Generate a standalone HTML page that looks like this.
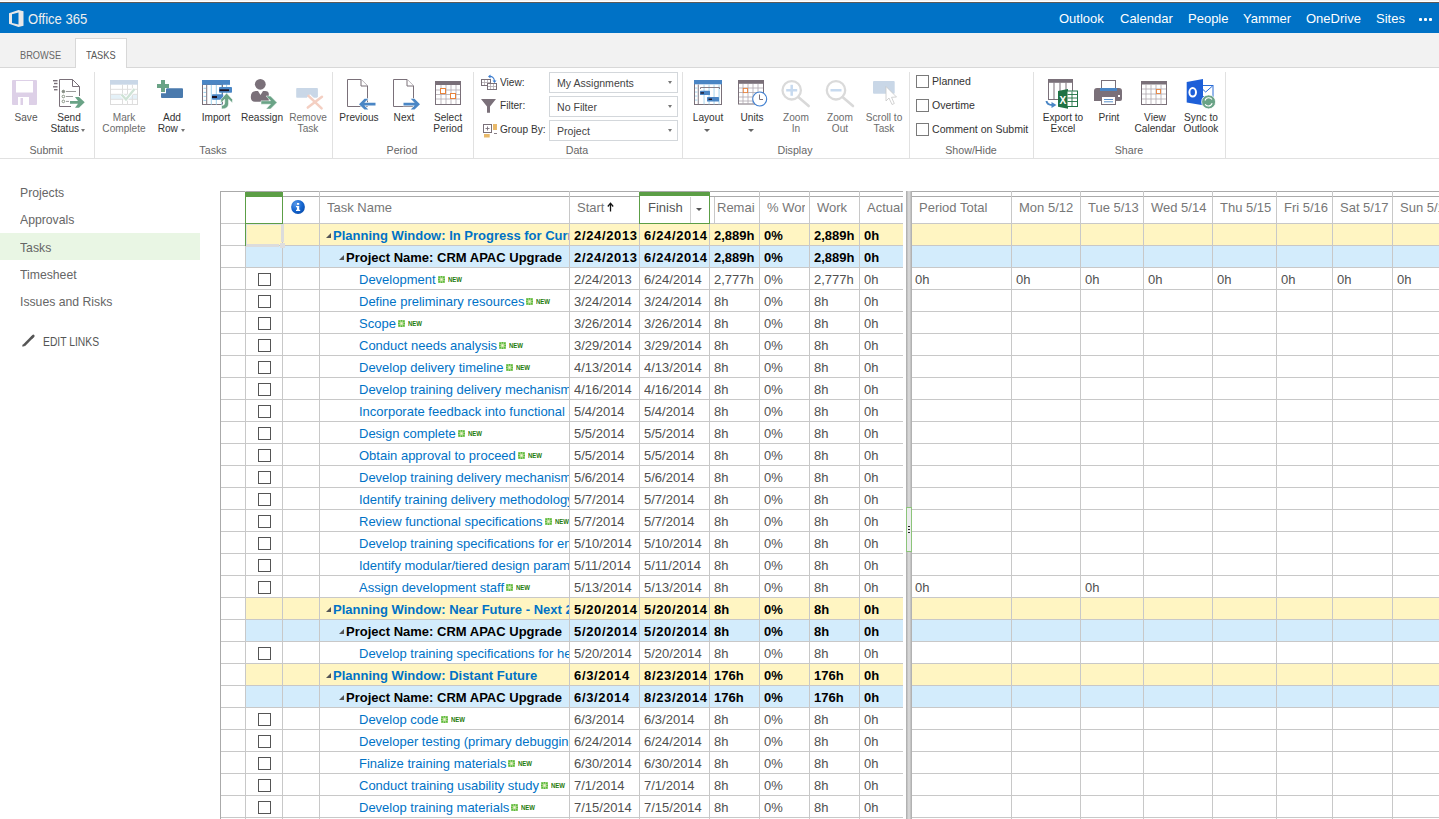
<!DOCTYPE html><html><head><meta charset="utf-8"><style>
*{margin:0;padding:0;box-sizing:border-box}
html,body{width:1439px;height:819px;overflow:hidden;background:#fff;font-family:"Liberation Sans",sans-serif;color:#444}
.a{position:absolute;white-space:nowrap}
.t{position:absolute;white-space:nowrap;line-height:14px}
</style></head><body>
<div class="a" style="left:0;top:0;width:1439px;height:1px;background:#f3f3f3"></div>
<div class="a" style="left:0;top:2px;width:1439px;height:1px;background:#5e5a57"></div>
<div class="a" style="left:0;top:3px;width:1439px;height:30px;background:#0072c6"></div>
<svg class="a" style="left:9px;top:10px" width="15" height="17" viewBox="0 0 15 17">
<path d="M0 3.2 L9.5 0 L14.5 1.3 L14.5 15.7 L9.5 17 L0 13.8 Z M3 4.3 L3 12.9 L9.5 14.6 L9.5 2.4 Z" fill="#e8e8e8" fill-rule="evenodd"/></svg>
<div class="t" style="left:28px;top:11px;font-size:15px;line-height:15px;color:#eee;transform-origin:0 0;transform:scaleX(0.87)">Office 365</div>
<div class="t" style="left:1059px;top:12px;font-size:13px;color:#fff">Outlook</div>
<div class="t" style="left:1120px;top:12px;font-size:13px;color:#fff">Calendar</div>
<div class="t" style="left:1188px;top:12px;font-size:13px;color:#fff">People</div>
<div class="t" style="left:1243px;top:12px;font-size:13px;color:#fff">Yammer</div>
<div class="t" style="left:1306px;top:12px;font-size:13px;color:#fff">OneDrive</div>
<div class="t" style="left:1376px;top:12px;font-size:13px;color:#fff">Sites</div>
<div class="a" style="left:1419px;top:18px;width:3px;height:3px;background:#fff;border-radius:1px"></div>
<div class="a" style="left:1424px;top:18px;width:3px;height:3px;background:#fff;border-radius:1px"></div>
<div class="a" style="left:1429px;top:18px;width:3px;height:3px;background:#fff;border-radius:1px"></div>
<div class="a" style="left:0;top:33px;width:1439px;height:35px;background:#f2f2f2;border-bottom:1px solid #d8d8d8"></div>
<div class="a" style="left:75px;top:38px;width:52px;height:30px;background:#fff;border:1px solid #d8d8d8;border-bottom:none"></div>
<div class="t" style="left:20px;top:48px;font-size:11px;color:#666;transform-origin:0 0;transform:scaleX(0.84)">BROWSE</div>
<div class="t" style="left:86px;top:48px;font-size:11px;color:#555;transform-origin:0 0;transform:scaleX(0.84)">TASKS</div>
<div class="a" style="left:0;top:158px;width:1439px;height:1px;background:#e1e1e1"></div>
<div class="a" style="left:94px;top:72px;width:1px;height:86px;background:#e1e1e1"></div>
<div class="a" style="left:332px;top:72px;width:1px;height:86px;background:#e1e1e1"></div>
<div class="a" style="left:473px;top:72px;width:1px;height:86px;background:#e1e1e1"></div>
<div class="a" style="left:682px;top:72px;width:1px;height:86px;background:#e1e1e1"></div>
<div class="a" style="left:909px;top:72px;width:1px;height:86px;background:#e1e1e1"></div>
<div class="a" style="left:1033px;top:72px;width:1px;height:86px;background:#e1e1e1"></div>
<div class="a" style="left:1225px;top:72px;width:1px;height:86px;background:#e1e1e1"></div>
<div class="t" style="left:-54.5px;width:200px;top:143px;font-size:11px;text-align:center;color:#666;transform:scaleX(0.97)">Submit</div>
<div class="t" style="left:112.5px;width:200px;top:143px;font-size:11px;text-align:center;color:#666;transform:scaleX(0.97)">Tasks</div>
<div class="t" style="left:301.5px;width:200px;top:143px;font-size:11px;text-align:center;color:#666;transform:scaleX(0.97)">Period</div>
<div class="t" style="left:476.5px;width:200px;top:143px;font-size:11px;text-align:center;color:#666;transform:scaleX(0.97)">Data</div>
<div class="t" style="left:694.5px;width:200px;top:143px;font-size:11px;text-align:center;color:#666;transform:scaleX(0.97)">Display</div>
<div class="t" style="left:870.5px;width:200px;top:143px;font-size:11px;text-align:center;color:#666;transform:scaleX(0.97)">Show/Hide</div>
<div class="t" style="left:1028.5px;width:200px;top:143px;font-size:11px;text-align:center;color:#666;transform:scaleX(0.97)">Share</div>
<div class="t" style="left:-74.5px;width:200px;top:110px;font-size:11px;text-align:center;color:#555;transform:scaleX(0.92)">Save</div>
<div class="t" style="left:-31.5px;width:200px;top:110px;font-size:11px;text-align:center;color:#333;transform:scaleX(0.92)">Send</div>
<div class="t" style="left:-31.5px;width:200px;top:121px;font-size:11px;text-align:center;color:#333;transform:scaleX(0.92)">Status&nbsp;&nbsp;&nbsp;</div>
<div class="t" style="left:23.5px;width:200px;top:110px;font-size:11px;text-align:center;color:#6c6c6c;transform:scaleX(0.92)">Mark</div>
<div class="t" style="left:23.5px;width:200px;top:121px;font-size:11px;text-align:center;color:#6c6c6c;transform:scaleX(0.92)">Complete</div>
<div class="t" style="left:71.5px;width:200px;top:110px;font-size:11px;text-align:center;color:#333;transform:scaleX(0.92)">Add</div>
<div class="t" style="left:71.5px;width:200px;top:121px;font-size:11px;text-align:center;color:#333;transform:scaleX(0.92)">Row&nbsp;&nbsp;&nbsp;</div>
<div class="t" style="left:115.5px;width:200px;top:110px;font-size:11px;text-align:center;color:#333;transform:scaleX(0.92)">Import</div>
<div class="t" style="left:161.5px;width:200px;top:110px;font-size:11px;text-align:center;color:#333;transform:scaleX(0.92)">Reassign</div>
<div class="t" style="left:207.5px;width:200px;top:110px;font-size:11px;text-align:center;color:#6c6c6c;transform:scaleX(0.92)">Remove</div>
<div class="t" style="left:207.5px;width:200px;top:121px;font-size:11px;text-align:center;color:#6c6c6c;transform:scaleX(0.92)">Task</div>
<div class="t" style="left:258.5px;width:200px;top:110px;font-size:11px;text-align:center;color:#333;transform:scaleX(0.92)">Previous</div>
<div class="t" style="left:303.5px;width:200px;top:110px;font-size:11px;text-align:center;color:#333;transform:scaleX(0.92)">Next</div>
<div class="t" style="left:347.5px;width:200px;top:110px;font-size:11px;text-align:center;color:#333;transform:scaleX(0.92)">Select</div>
<div class="t" style="left:347.5px;width:200px;top:121px;font-size:11px;text-align:center;color:#333;transform:scaleX(0.92)">Period</div>
<div class="t" style="left:607.5px;width:200px;top:110px;font-size:11px;text-align:center;color:#333;transform:scaleX(0.92)">Layout</div>
<div class="t" style="left:651.5px;width:200px;top:110px;font-size:11px;text-align:center;color:#333;transform:scaleX(0.92)">Units</div>
<div class="t" style="left:695.5px;width:200px;top:110px;font-size:11px;text-align:center;color:#6c6c6c;transform:scaleX(0.92)">Zoom</div>
<div class="t" style="left:695.5px;width:200px;top:121px;font-size:11px;text-align:center;color:#6c6c6c;transform:scaleX(0.92)">In</div>
<div class="t" style="left:739.5px;width:200px;top:110px;font-size:11px;text-align:center;color:#6c6c6c;transform:scaleX(0.92)">Zoom</div>
<div class="t" style="left:739.5px;width:200px;top:121px;font-size:11px;text-align:center;color:#6c6c6c;transform:scaleX(0.92)">Out</div>
<div class="t" style="left:783.5px;width:200px;top:110px;font-size:11px;text-align:center;color:#6c6c6c;transform:scaleX(0.92)">Scroll to</div>
<div class="t" style="left:783.5px;width:200px;top:121px;font-size:11px;text-align:center;color:#6c6c6c;transform:scaleX(0.92)">Task</div>
<div class="t" style="left:962.5px;width:200px;top:110px;font-size:11px;text-align:center;color:#333;transform:scaleX(0.92)">Export to</div>
<div class="t" style="left:962.5px;width:200px;top:121px;font-size:11px;text-align:center;color:#333;transform:scaleX(0.92)">Excel</div>
<div class="t" style="left:1008.5px;width:200px;top:110px;font-size:11px;text-align:center;color:#333;transform:scaleX(0.92)">Print</div>
<div class="t" style="left:1054.5px;width:200px;top:110px;font-size:11px;text-align:center;color:#333;transform:scaleX(0.92)">View</div>
<div class="t" style="left:1054.5px;width:200px;top:121px;font-size:11px;text-align:center;color:#333;transform:scaleX(0.92)">Calendar</div>
<div class="t" style="left:1100.5px;width:200px;top:110px;font-size:11px;text-align:center;color:#333;transform:scaleX(0.92)">Sync to</div>
<div class="t" style="left:1100.5px;width:200px;top:121px;font-size:11px;text-align:center;color:#333;transform:scaleX(0.92)">Outlook</div>
<div class="a" style="left:81px;top:129px;width:0;height:0;border-left:2.5px solid transparent;border-right:2.5px solid transparent;border-top:3px solid #777"></div>
<div class="a" style="left:181px;top:129px;width:0;height:0;border-left:2.5px solid transparent;border-right:2.5px solid transparent;border-top:3px solid #777"></div>
<div class="a" style="left:704px;top:129px;width:0;height:0;border-left:3px solid transparent;border-right:3px solid transparent;border-top:3px solid #666"></div>
<div class="a" style="left:748px;top:129px;width:0;height:0;border-left:3px solid transparent;border-right:3px solid transparent;border-top:3px solid #666"></div>
<div class="t" style="left:500px;top:75px;font-size:11px;color:#333;transform-origin:0 0;transform:scaleX(0.92)">View:</div>
<div class="t" style="left:500px;top:98px;font-size:11px;color:#333;transform-origin:0 0;transform:scaleX(0.92)">Filter:</div>
<div class="t" style="left:500px;top:122px;font-size:11px;color:#333;transform-origin:0 0;transform:scaleX(0.92)">Group By:</div>
<div class="a" style="left:549px;top:72px;width:129px;height:21px;border:1px solid #d3d7db;background:#fff"></div>
<div class="t" style="left:557px;top:76px;font-size:11px;color:#444;transform-origin:0 0;transform:scaleX(0.96)">My Assignments</div>
<div class="a" style="left:668px;top:81px;width:0;height:0;border-left:2.5px solid transparent;border-right:2.5px solid transparent;border-top:3px solid #777"></div>
<div class="a" style="left:549px;top:96px;width:129px;height:21px;border:1px solid #d3d7db;background:#fff"></div>
<div class="t" style="left:557px;top:100px;font-size:11px;color:#444;transform-origin:0 0;transform:scaleX(0.96)">No Filter</div>
<div class="a" style="left:668px;top:105px;width:0;height:0;border-left:2.5px solid transparent;border-right:2.5px solid transparent;border-top:3px solid #777"></div>
<div class="a" style="left:549px;top:120px;width:129px;height:21px;border:1px solid #d3d7db;background:#fff"></div>
<div class="t" style="left:557px;top:124px;font-size:11px;color:#444;transform-origin:0 0;transform:scaleX(0.96)">Project</div>
<div class="a" style="left:668px;top:129px;width:0;height:0;border-left:2.5px solid transparent;border-right:2.5px solid transparent;border-top:3px solid #777"></div>
<div class="a" style="left:916px;top:75px;width:13px;height:13px;border:1px solid #7a7a7a;background:#fff"></div>
<div class="t" style="left:932px;top:74px;font-size:11px;color:#333;transform-origin:0 0;transform:scaleX(0.96)">Planned</div>
<div class="a" style="left:916px;top:99px;width:13px;height:13px;border:1px solid #7a7a7a;background:#fff"></div>
<div class="t" style="left:932px;top:98px;font-size:11px;color:#333;transform-origin:0 0;transform:scaleX(0.96)">Overtime</div>
<div class="a" style="left:916px;top:123px;width:13px;height:13px;border:1px solid #7a7a7a;background:#fff"></div>
<div class="t" style="left:932px;top:122px;font-size:11px;color:#333;transform-origin:0 0;transform:scaleX(0.96)">Comment on Submit</div>
<div class="a" style="left:0;top:233px;width:200px;height:27px;background:#e9f6e4"></div>
<div class="t" style="left:20px;top:185px;font-size:13px;line-height:16px;color:#666;transform-origin:0 0;transform:scaleX(0.94)">Projects</div>
<div class="t" style="left:20px;top:212px;font-size:13px;line-height:16px;color:#666;transform-origin:0 0;transform:scaleX(0.94)">Approvals</div>
<div class="t" style="left:20px;top:240px;font-size:13px;line-height:16px;color:#666;transform-origin:0 0;transform:scaleX(0.94)">Tasks</div>
<div class="t" style="left:20px;top:267px;font-size:13px;line-height:16px;color:#666;transform-origin:0 0;transform:scaleX(0.94)">Timesheet</div>
<div class="t" style="left:20px;top:294px;font-size:13px;line-height:16px;color:#666;transform-origin:0 0;transform:scaleX(0.94)">Issues and Risks</div>
<div class="t" style="left:43px;top:335px;font-size:12px;color:#555;transform-origin:0 0;transform:scaleX(0.86)">EDIT LINKS</div>
<svg class="a" style="left:20px;top:333px" width="16" height="15" viewBox="0 0 16 15"><path d="M4 12.3 L12.6 3.7" stroke="#555" stroke-width="2.6"/><path d="M12 4.3 L13.3 3" stroke="#555" stroke-width="2.6" stroke-linecap="round"/><path d="M3.2 11.6 L2.6 13.2 L4.4 12.8 Z" fill="#555" stroke="#555" stroke-width="0.8"/></svg>
<svg class="a" style="left:0;top:0" width="1439" height="160" viewBox="0 0 1439 160"><path d="M12 81 Q12 80 13 80 L36 80 Q37 80 37 81 L37 104 Q37 105 36 105 L13 105 Q12 105 12 104 Z" fill="#ddd0e7"/><rect x="16" y="81" width="17" height="11.5" fill="#fff"/><rect x="18" y="97" width="11" height="8" fill="#fff"/><rect x="20.5" y="98" width="2.5" height="7" fill="#ddd0e7"/><path d="M71 106.5 L59.5 106.5 L59.5 79.5 L72.5 79.5 L79.5 86.5 L79.5 96" fill="none" stroke="#7a7079" stroke-width="1"/><path d="M72.5 79.5 L72.5 86.5 L79.5 86.5" fill="none" stroke="#7a7079" stroke-width="1"/><rect x="53" y="80.0" width="4.5" height="1.4" fill="#7a7079"/><rect x="54" y="82.8" width="3.5" height="1.4" fill="#7a7079"/><rect x="53" y="86.1" width="4.5" height="1.4" fill="#7a7079"/><rect x="54" y="89.0" width="3.5" height="1.4" fill="#7a7079"/><circle cx="63.4" cy="91.5" r="1.3" fill="#8a8a8a" stroke="#7d8a78" stroke-width="0.9"/><rect x="66" y="91.0" width="10" height="1" fill="#9a9a9a"/><circle cx="63.4" cy="96.5" r="1.3" fill="none" stroke="#7d8a78" stroke-width="0.9"/><rect x="66" y="96.0" width="7" height="1" fill="#9a9a9a"/><circle cx="63.4" cy="101.4" r="1.3" fill="none" stroke="#7d8a78" stroke-width="0.9"/><rect x="66" y="100.9" width="3" height="1" fill="#9a9a9a"/><path d="M70 101 L78 101 L75 97 L79 97 L84.7 102.3 L79 107.7 L75 107.7 L78 103.7 L70 103.7 Z" fill="#6aa386"/><rect x="110.5" y="80.5" width="27" height="24" fill="#fff" stroke="#dcdcdc"/><rect x="110" y="80" width="28" height="4.7" fill="#c9d7e7"/><rect x="111" y="94.3" width="26" height="4.8" fill="#e4f1f8"/><rect x="111" y="88.8" width="26" height="1" fill="#dedede"/><rect x="111" y="93.8" width="26" height="1" fill="#dedede"/><rect x="111" y="98.8" width="26" height="1" fill="#dedede"/><rect x="122.0" y="84.7" width="1" height="20" fill="#dedede"/><rect x="127.0" y="84.7" width="1" height="20" fill="#dedede"/><rect x="131.9" y="84.7" width="1" height="20" fill="#dedede"/><path d="M121.5 94.5 L126 99.5 L134.5 89" fill="none" stroke="#fff" stroke-width="4"/><path d="M121.5 94.5 L126 99.5 L134.5 89" fill="none" stroke="#cfe3d6" stroke-width="2.4"/><path d="M161 80 L165 80 L165 84 L169 84 L169 88 L165 88 L165 92 L161 92 L161 88 L157 88 L157 84 L161 84 Z" fill="#6aa386"/><path d="M167 88.2 L182 88.2 Q183 88.2 183 89 L183 97 Q183 98 182 98 L162 98 Q161 98 161 97 L161 93.2 L166 93.2 L166 89 Z" fill="#4a7aad"/><rect x="202.5" y="84.5" width="20" height="20" fill="#fff" stroke="#7a7079"/><rect x="206.2" y="84.7" width="1" height="20" fill="#7a7079"/><rect x="210.8" y="84.7" width="1" height="20" fill="#9fd3ee"/><rect x="215.8" y="84.7" width="1" height="20" fill="#9fd3ee"/><rect x="221.1" y="84.7" width="1" height="20" fill="#9fd3ee"/><rect x="226.1" y="84.7" width="1" height="20" fill="#9fd3ee"/><rect x="203.5" y="87.8" width="2.5" height="1" fill="#9fd3ee"/><rect x="203.5" y="91.9" width="2.5" height="1" fill="#9fd3ee"/><rect x="203.5" y="95.9" width="2.5" height="1" fill="#9fd3ee"/><rect x="203.5" y="99.9" width="2.5" height="1" fill="#9fd3ee"/><rect x="222.5" y="104" width="6" height="1.2" fill="#fff"/><rect x="202" y="80" width="28" height="4.8" fill="#4a86c5"/><rect x="219" y="87" width="13" height="5.8" rx="0.8" fill="#4a86c5"/><rect x="219.5" y="89.3" width="9.5" height="1.8" fill="#1a0f1e"/><rect x="212" y="94.3" width="11.3" height="5.4" rx="0.8" fill="#4a86c5"/><rect x="212" y="96" width="5" height="2" fill="#1a0f1e"/><path d="M226.6 93 L232.5 99.5 L232.5 103 L228.6 99.3 L228.6 104 Q228.3 109 221.5 109 L221.5 105.5 Q224.6 105.5 224.7 103 L224.7 99.3 L220.8 103 L220.8 99.5 Z" fill="#6aa386" stroke="#fff" stroke-width="0.6"/><circle cx="260.3" cy="84.3" r="5.4" fill="#7a7079"/><path d="M250.8 97 Q250.8 91 256 91 L258 91 L260.5 95 L263 91 L265 91 Q268.8 91 268.8 94 L268.8 101.8 L255 101.8 Q250.8 101.8 250.8 97 Z" fill="#7a7079"/><path d="M261 100.8 L270.5 100.8 L266 96 L270.5 96 L277 102.5 L270.5 109 L266 109 L270.5 104.2 L261 104.2 Z" fill="#6aa386" stroke="#fff" stroke-width="0.5"/><rect x="296.2" y="88.1" width="21.7" height="9.7" rx="0.8" fill="#c9d7e7"/><path d="M308.5 95.8 L321.6 108.3 M322 96.7 L307.8 107.6" stroke="#fff" stroke-width="4.5"/><path d="M308.5 95.8 L321.6 108.3 M322 96.7 L307.8 107.6" stroke="#f4cfc2" stroke-width="2.5" stroke-linecap="round"/><path d="M347.5 79.5 L361 79.5 L367.5 86 L367.5 106.5 L347.5 106.5 Z" fill="#fff" stroke="#7a7079"/><path d="M361 79.5 L361 86 L367.5 86" fill="#fff" stroke="#7a7079"/><path d="M393.5 79.5 L407 79.5 L413.5 86 L413.5 106.5 L393.5 106.5 Z" fill="#fff" stroke="#7a7079"/><path d="M407 79.5 L407 86 L413.5 86" fill="#fff" stroke="#7a7079"/><path d="M359 104.2 L364.5 98.8 L368.3 98.8 L364.3 102.8 L375.5 102.8 L375.5 105.6 L364.3 105.6 L368.3 109.6 L364.5 109.6 Z" fill="#4a86c5" stroke="#fff" stroke-width="1.2" paint-order="stroke"/><path d="M420 104.2 L414.5 98.8 L410.7 98.8 L414.7 102.8 L403.5 102.8 L403.5 105.6 L414.7 105.6 L410.7 109.6 L414.5 109.6 Z" fill="#4a86c5" stroke="#fff" stroke-width="1.2" paint-order="stroke"/><rect x="435.5" y="81.5" width="25" height="23" fill="#fff" stroke="#7a7079"/><rect x="435" y="81" width="26" height="4" fill="#7a7079"/><rect x="436" y="89.6" width="24" height="0.8" fill="#b0a8ae"/><rect x="436" y="94.1" width="24" height="0.8" fill="#b0a8ae"/><rect x="436" y="98.6" width="24" height="0.8" fill="#b0a8ae"/><rect x="440.6" y="85" width="0.8" height="19" fill="#b0a8ae"/><rect x="445.6" y="85" width="0.8" height="19" fill="#b0a8ae"/><rect x="450.6" y="85" width="0.8" height="19" fill="#b0a8ae"/><rect x="455.6" y="85" width="0.8" height="19" fill="#b0a8ae"/><rect x="440.5" y="88.5" width="5" height="5" fill="#fff" stroke="#e8823a" stroke-width="1"/><rect x="450.5" y="93.5" width="5" height="5" fill="#fff" stroke="#e8823a" stroke-width="1"/><rect x="481.5" y="79.5" width="9" height="6" fill="#fff" stroke="#7a7079"/><path d="M482 82.5 L490 82.5 M484.5 80 L484.5 85 M487.5 80 L487.5 85" stroke="#b0a8ae" stroke-width="0.8"/><rect x="487.5" y="83.5" width="9" height="6" fill="#fff" stroke="#7a7079"/><path d="M488 86.5 L496 86.5 M490.5 84 L490.5 89 M493.5 84 L493.5 89" stroke="#b0a8ae" stroke-width="0.8"/><path d="M489 76.5 Q494 76 494.5 81" fill="none" stroke="#3f7fd0" stroke-width="1.2"/><path d="M488 76.5 L490.5 74.5 L490.5 78.5 Z M492.5 80.5 L496.5 80.5 L494.5 83 Z" fill="#3f7fd0"/><path d="M481 99 L496 99 L490 106.5 L490 112.7 L487 112.7 L487 106.5 Z" fill="#7a7079"/><rect x="483.5" y="124.5" width="8" height="8" fill="#fff" stroke="#7a7079"/><path d="M485.5 128.5 L489.5 128.5 M487.5 126.5 L487.5 130.5" stroke="#7a7079" stroke-width="0.9"/><rect x="493" y="124" width="4" height="6" fill="#e8b96a"/><rect x="484" y="134" width="5.7" height="3.5" fill="#e8b96a"/><rect x="494" y="133" width="3" height="0.9" fill="#7a7079"/><rect x="694.5" y="80.5" width="27" height="24" fill="#fff" stroke="#7a7079"/><rect x="694" y="80" width="28" height="4.3" fill="#4a86c5"/><rect x="697.8" y="84.5" width="0.9" height="20" fill="#7a7079"/><rect x="703.6" y="84.5" width="0.9" height="20" fill="#9fd3ee"/><rect x="708.6" y="84.5" width="0.9" height="20" fill="#9fd3ee"/><rect x="713.6" y="84.5" width="0.9" height="20" fill="#9fd3ee"/><rect x="718.6" y="84.5" width="0.9" height="20" fill="#9fd3ee"/><rect x="695" y="87.6" width="2.5" height="0.9" fill="#9fd3ee"/><rect x="695" y="91.6" width="2.5" height="0.9" fill="#9fd3ee"/><rect x="695" y="95.6" width="2.5" height="0.9" fill="#9fd3ee"/><rect x="695" y="99.6" width="2.5" height="0.9" fill="#9fd3ee"/><path d="M700.5 89 L700.5 87.5 L719.5 87.5 L719.5 89" fill="none" stroke="#7a7079" stroke-width="0.9"/><rect x="700" y="90.8" width="10" height="4.2" rx="0.6" fill="#4a86c5"/><rect x="700.5" y="92.3" width="3.5" height="1.3" fill="#1a0f1e"/><rect x="707" y="97" width="12" height="4.5" rx="0.6" fill="#4a86c5"/><rect x="708.5" y="98.6" width="3.5" height="1.3" fill="#1a0f1e"/><rect x="738.5" y="80.5" width="25" height="23.5" fill="#fff" stroke="#7a7079"/><rect x="738" y="80" width="26" height="3.8" fill="#7a7079"/><rect x="739" y="87.6" width="24" height="0.8" fill="#b0a8ae"/><rect x="739" y="92.1" width="24" height="0.8" fill="#b0a8ae"/><rect x="739" y="96.6" width="24" height="0.8" fill="#b0a8ae"/><rect x="739" y="100.6" width="24" height="0.8" fill="#b0a8ae"/><rect x="742.6" y="84" width="0.8" height="20" fill="#b0a8ae"/><rect x="747.6" y="84" width="0.8" height="20" fill="#b0a8ae"/><rect x="752.6" y="84" width="0.8" height="20" fill="#b0a8ae"/><rect x="757.6" y="84" width="0.8" height="20" fill="#b0a8ae"/><rect x="743.3" y="88.4" width="4.2" height="4.2" fill="#fff" stroke="#e8823a" stroke-width="0.9"/><circle cx="759.7" cy="99" r="7" fill="#fff" stroke="#3f7fd0" stroke-width="1.1"/><path d="M759.5 94.5 L759.5 99.5 L763 99.5" fill="none" stroke="#7a7079" stroke-width="1"/><circle cx="791.7" cy="90.3" r="9.2" fill="#fff" stroke="#dadada" stroke-width="2.3"/><path d="M798.2 97 L808.7 106" stroke="#d9d9d9" stroke-width="2.6" stroke-linecap="round"/><rect x="786.2" y="89" width="11" height="2.5" fill="#c7daef"/><rect x="790.45" y="84.8" width="2.5" height="11" fill="#c7daef"/><circle cx="836" cy="90.3" r="9.2" fill="#fff" stroke="#dadada" stroke-width="2.3"/><path d="M842.5 97 L853 106" stroke="#d9d9d9" stroke-width="2.6" stroke-linecap="round"/><rect x="830.5" y="89" width="11" height="2.5" fill="#c7daef"/><rect x="873" y="81" width="21.7" height="12.7" rx="1" fill="#c9d7e7"/><path d="M886 86.5 L886 101 L889 98 L892 104.5 L894.3 103.5 L891.5 97.3 L896.5 97 Z" fill="#fff" stroke="#c7c7c7" stroke-width="0.8"/><rect x="1048.5" y="79.5" width="24" height="20" fill="#fff" stroke="#7a7079"/><rect x="1048" y="79" width="25" height="3.8" fill="#7a7079"/><rect x="1053.5" y="82.5" width="1" height="17" fill="#7a7079"/><rect x="1059.5" y="82.5" width="1" height="17" fill="#7a7079"/><rect x="1065.5" y="82.5" width="1" height="17" fill="#7a7079"/><path d="M1058 91 L1068 89 L1068 108.8 L1058 106.8 Z" fill="#1f7244"/><rect x="1067" y="91" width="10.5" height="15.5" fill="#fff" stroke="#1f7244" stroke-width="1"/><path d="M1067.5 94.5 L1077 94.5 M1067.5 98 L1077 98 M1067.5 101.5 L1077 101.5 M1072 91.5 L1072 106" stroke="#1f7244" stroke-width="0.9"/><text x="1059.5" y="103.5" font-family="Liberation Sans" font-weight="bold" font-size="10" fill="#fff">X</text><path d="M1046.5 101 Q1047 105 1052.5 105" fill="none" stroke="#4a86c5" stroke-width="2"/><path d="M1051.5 102 L1056.5 105 L1051.5 108 Z" fill="#4a86c5"/><rect x="1101.5" y="80.5" width="14" height="8" fill="#fff" stroke="#7a7079"/><path d="M1094 91 Q1094 88 1097 88 L1119 88 Q1122 88 1122 91 L1122 99 Q1122 101 1120 101 L1094 101 Z" fill="#7a7079"/><rect x="1100" y="88" width="17" height="3" fill="#4a86c5"/><rect x="1101.5" y="96.5" width="14" height="8" fill="#fff" stroke="#7a7079"/><path d="M1104 99.5 L1113 99.5 M1104 101.8 L1113 101.8" stroke="#4a86c5" stroke-width="0.9"/><rect x="1118" y="95" width="2" height="2" fill="#fff"/><rect x="1141.5" y="81.5" width="25" height="23" fill="#fff" stroke="#7a7079"/><rect x="1141" y="81" width="26" height="3.5" fill="#7a7079"/><rect x="1142" y="88.6" width="24" height="0.8" fill="#b0a8ae"/><rect x="1142" y="93.6" width="24" height="0.8" fill="#b0a8ae"/><rect x="1142" y="98.6" width="24" height="0.8" fill="#b0a8ae"/><rect x="1145.6" y="84.5" width="0.8" height="20" fill="#b0a8ae"/><rect x="1150.6" y="84.5" width="0.8" height="20" fill="#b0a8ae"/><rect x="1155.6" y="84.5" width="0.8" height="20" fill="#b0a8ae"/><rect x="1160.6" y="84.5" width="0.8" height="20" fill="#b0a8ae"/><rect x="1156.5" y="89.5" width="4" height="4" fill="#fff" stroke="#e8823a" stroke-width="0.9"/><rect x="1198.5" y="85.5" width="14.5" height="11" fill="#fff" stroke="#2a6cd6" stroke-width="1"/><path d="M1199 86 L1205.7 92 L1212.5 86" fill="none" stroke="#2a6cd6" stroke-width="1"/><path d="M1186.7 82 L1203 79 L1203 105.3 L1186.7 102.5 Z" fill="#1d5fd8"/><ellipse cx="1192.7" cy="92.3" rx="3.3" ry="4.2" fill="none" stroke="#fff" stroke-width="2"/><circle cx="1208.6" cy="101.9" r="7" fill="#6aa386" stroke="#fff" stroke-width="0.8"/><path d="M1205 100.5 Q1206 97.5 1209 97.8 Q1211 98 1212 99.5 M1212.2 103.3 Q1211 106.3 1208 106 Q1206 105.8 1205.2 104.3" fill="none" stroke="#fff" stroke-width="1.1"/></svg>
<div class="a" style="left:245px;top:223px;width:658px;height:22px;background:#fff5c2"></div>
<div class="a" style="left:911px;top:223px;width:528px;height:22px;background:#fff5c2"></div>
<div class="a" style="left:245px;top:245px;width:658px;height:22px;background:#d3ecfc"></div>
<div class="a" style="left:911px;top:245px;width:528px;height:22px;background:#d3ecfc"></div>
<div class="a" style="left:245px;top:597px;width:658px;height:22px;background:#fff5c2"></div>
<div class="a" style="left:911px;top:597px;width:528px;height:22px;background:#fff5c2"></div>
<div class="a" style="left:245px;top:619px;width:658px;height:22px;background:#d3ecfc"></div>
<div class="a" style="left:911px;top:619px;width:528px;height:22px;background:#d3ecfc"></div>
<div class="a" style="left:245px;top:663px;width:658px;height:22px;background:#fff5c2"></div>
<div class="a" style="left:911px;top:663px;width:528px;height:22px;background:#fff5c2"></div>
<div class="a" style="left:245px;top:685px;width:658px;height:22px;background:#d3ecfc"></div>
<div class="a" style="left:911px;top:685px;width:528px;height:22px;background:#d3ecfc"></div>
<div class="a" style="left:220px;top:191px;width:683px;height:1px;background:#aaa"></div>
<div class="a" style="left:245px;top:196px;width:658px;height:1px;background:#aaa"></div>
<div class="a" style="left:911px;top:191px;width:528px;height:1px;background:#aaa"></div>
<div class="a" style="left:911px;top:196px;width:528px;height:1px;background:#aaa"></div>
<div class="a" style="left:220px;top:223px;width:683px;height:1px;background:#c8c8c8"></div>
<div class="a" style="left:911px;top:223px;width:528px;height:1px;background:#c8c8c8"></div>
<div class="a" style="left:220px;top:245px;width:683px;height:1px;background:#c8c8c8"></div>
<div class="a" style="left:911px;top:245px;width:528px;height:1px;background:#c8c8c8"></div>
<div class="a" style="left:220px;top:267px;width:683px;height:1px;background:#c8c8c8"></div>
<div class="a" style="left:911px;top:267px;width:528px;height:1px;background:#c8c8c8"></div>
<div class="a" style="left:220px;top:289px;width:683px;height:1px;background:#c8c8c8"></div>
<div class="a" style="left:911px;top:289px;width:528px;height:1px;background:#c8c8c8"></div>
<div class="a" style="left:220px;top:311px;width:683px;height:1px;background:#c8c8c8"></div>
<div class="a" style="left:911px;top:311px;width:528px;height:1px;background:#c8c8c8"></div>
<div class="a" style="left:220px;top:333px;width:683px;height:1px;background:#c8c8c8"></div>
<div class="a" style="left:911px;top:333px;width:528px;height:1px;background:#c8c8c8"></div>
<div class="a" style="left:220px;top:355px;width:683px;height:1px;background:#c8c8c8"></div>
<div class="a" style="left:911px;top:355px;width:528px;height:1px;background:#c8c8c8"></div>
<div class="a" style="left:220px;top:377px;width:683px;height:1px;background:#c8c8c8"></div>
<div class="a" style="left:911px;top:377px;width:528px;height:1px;background:#c8c8c8"></div>
<div class="a" style="left:220px;top:399px;width:683px;height:1px;background:#c8c8c8"></div>
<div class="a" style="left:911px;top:399px;width:528px;height:1px;background:#c8c8c8"></div>
<div class="a" style="left:220px;top:421px;width:683px;height:1px;background:#c8c8c8"></div>
<div class="a" style="left:911px;top:421px;width:528px;height:1px;background:#c8c8c8"></div>
<div class="a" style="left:220px;top:443px;width:683px;height:1px;background:#c8c8c8"></div>
<div class="a" style="left:911px;top:443px;width:528px;height:1px;background:#c8c8c8"></div>
<div class="a" style="left:220px;top:465px;width:683px;height:1px;background:#c8c8c8"></div>
<div class="a" style="left:911px;top:465px;width:528px;height:1px;background:#c8c8c8"></div>
<div class="a" style="left:220px;top:487px;width:683px;height:1px;background:#c8c8c8"></div>
<div class="a" style="left:911px;top:487px;width:528px;height:1px;background:#c8c8c8"></div>
<div class="a" style="left:220px;top:509px;width:683px;height:1px;background:#c8c8c8"></div>
<div class="a" style="left:911px;top:509px;width:528px;height:1px;background:#c8c8c8"></div>
<div class="a" style="left:220px;top:531px;width:683px;height:1px;background:#c8c8c8"></div>
<div class="a" style="left:911px;top:531px;width:528px;height:1px;background:#c8c8c8"></div>
<div class="a" style="left:220px;top:553px;width:683px;height:1px;background:#c8c8c8"></div>
<div class="a" style="left:911px;top:553px;width:528px;height:1px;background:#c8c8c8"></div>
<div class="a" style="left:220px;top:575px;width:683px;height:1px;background:#c8c8c8"></div>
<div class="a" style="left:911px;top:575px;width:528px;height:1px;background:#c8c8c8"></div>
<div class="a" style="left:220px;top:597px;width:683px;height:1px;background:#c8c8c8"></div>
<div class="a" style="left:911px;top:597px;width:528px;height:1px;background:#c8c8c8"></div>
<div class="a" style="left:220px;top:619px;width:683px;height:1px;background:#c8c8c8"></div>
<div class="a" style="left:911px;top:619px;width:528px;height:1px;background:#c8c8c8"></div>
<div class="a" style="left:220px;top:641px;width:683px;height:1px;background:#c8c8c8"></div>
<div class="a" style="left:911px;top:641px;width:528px;height:1px;background:#c8c8c8"></div>
<div class="a" style="left:220px;top:663px;width:683px;height:1px;background:#c8c8c8"></div>
<div class="a" style="left:911px;top:663px;width:528px;height:1px;background:#c8c8c8"></div>
<div class="a" style="left:220px;top:685px;width:683px;height:1px;background:#c8c8c8"></div>
<div class="a" style="left:911px;top:685px;width:528px;height:1px;background:#c8c8c8"></div>
<div class="a" style="left:220px;top:707px;width:683px;height:1px;background:#c8c8c8"></div>
<div class="a" style="left:911px;top:707px;width:528px;height:1px;background:#c8c8c8"></div>
<div class="a" style="left:220px;top:729px;width:683px;height:1px;background:#c8c8c8"></div>
<div class="a" style="left:911px;top:729px;width:528px;height:1px;background:#c8c8c8"></div>
<div class="a" style="left:220px;top:751px;width:683px;height:1px;background:#c8c8c8"></div>
<div class="a" style="left:911px;top:751px;width:528px;height:1px;background:#c8c8c8"></div>
<div class="a" style="left:220px;top:773px;width:683px;height:1px;background:#c8c8c8"></div>
<div class="a" style="left:911px;top:773px;width:528px;height:1px;background:#c8c8c8"></div>
<div class="a" style="left:220px;top:795px;width:683px;height:1px;background:#c8c8c8"></div>
<div class="a" style="left:911px;top:795px;width:528px;height:1px;background:#c8c8c8"></div>
<div class="a" style="left:220px;top:817px;width:683px;height:1px;background:#c8c8c8"></div>
<div class="a" style="left:911px;top:817px;width:528px;height:1px;background:#c8c8c8"></div>
<div class="a" style="left:220px;top:191px;width:1px;height:628px;background:#aaa"></div>
<div class="a" style="left:245px;top:191px;width:1px;height:628px;background:#c8c8c8"></div>
<div class="a" style="left:282px;top:191px;width:1px;height:628px;background:#c8c8c8"></div>
<div class="a" style="left:319px;top:191px;width:1px;height:628px;background:#c8c8c8"></div>
<div class="a" style="left:569px;top:191px;width:1px;height:628px;background:#c8c8c8"></div>
<div class="a" style="left:639px;top:191px;width:1px;height:628px;background:#c8c8c8"></div>
<div class="a" style="left:709px;top:191px;width:1px;height:628px;background:#c8c8c8"></div>
<div class="a" style="left:759px;top:191px;width:1px;height:628px;background:#c8c8c8"></div>
<div class="a" style="left:809px;top:191px;width:1px;height:628px;background:#c8c8c8"></div>
<div class="a" style="left:859px;top:191px;width:1px;height:628px;background:#c8c8c8"></div>
<div class="a" style="left:1011px;top:191px;width:1px;height:628px;background:#c8c8c8"></div>
<div class="a" style="left:1080px;top:191px;width:1px;height:628px;background:#c8c8c8"></div>
<div class="a" style="left:1143px;top:191px;width:1px;height:628px;background:#c8c8c8"></div>
<div class="a" style="left:1212px;top:191px;width:1px;height:628px;background:#c8c8c8"></div>
<div class="a" style="left:1276px;top:191px;width:1px;height:628px;background:#c8c8c8"></div>
<div class="a" style="left:1332px;top:191px;width:1px;height:628px;background:#c8c8c8"></div>
<div class="a" style="left:1392px;top:191px;width:1px;height:628px;background:#c8c8c8"></div>
<div class="a" style="left:714px;top:197px;width:1px;height:26px;background:#c8c8c8"></div>
<div class="a" style="left:906px;top:191px;width:6px;height:628px;background:linear-gradient(90deg,#a9a9a9,#d9d9d9 45%,#d9d9d9 55%,#a9a9a9)"></div>
<div class="a" style="left:906px;top:507px;width:6px;height:45px;background:#ececee;border:1px solid #8cc47a"></div>
<div class="a" style="left:908px;top:526px;width:2px;height:1px;background:#222"></div>
<div class="a" style="left:908px;top:529px;width:2px;height:1px;background:#222"></div>
<div class="a" style="left:908px;top:532px;width:2px;height:1px;background:#222"></div>
<div class="a" style="left:245px;top:192px;width:38px;height:5px;background:#5c9e46"></div>
<div class="a" style="left:245px;top:196px;width:38px;height:28px;border:1px solid #5c9e46;border-top:none"></div>
<div class="a" style="left:639px;top:192px;width:71px;height:5px;background:#5c9e46"></div>
<div class="a" style="left:639px;top:196px;width:71px;height:28px;border:1px solid #5c9e46;border-top:none;background:#fff"></div>
<div class="a" style="left:690px;top:197px;width:1px;height:26px;background:#d0d0d0"></div>
<div class="a" style="left:696px;top:208px;width:0;height:0;border-left:3.5px solid transparent;border-right:3.5px solid transparent;border-top:3.5px solid #555"></div>
<div class="a" style="left:245px;top:224px;width:1px;height:22px;background:#5c9e46"></div>
<div class="a" style="left:246px;top:224px;width:36px;height:1px;background:#e2e2e2"></div>
<div class="a" style="left:246px;top:224px;width:1px;height:21px;background:#e2e2e2"></div>
<div class="a" style="left:281px;top:224px;width:3px;height:18px;background:#dcdcdc"></div>
<div class="a" style="left:246px;top:244px;width:33px;height:3px;background:#dcdcdc"></div>
<div class="a" style="left:280px;top:243px;width:5px;height:5px;background:#dedede"></div>
<div class="a" style="left:327px;top:201px;width:242px;height:16px;overflow:hidden;font-size:13px;line-height:14px;color:#777">Task Name</div>
<div class="a" style="left:577px;top:201px;width:62px;height:16px;overflow:hidden;font-size:13px;line-height:14px;color:#777">Start</div>
<div class="a" style="left:717px;top:201px;width:38px;height:16px;overflow:hidden;font-size:13px;line-height:14px;color:#777">Remaining</div>
<div class="a" style="left:767px;top:201px;width:38px;height:16px;overflow:hidden;font-size:13px;line-height:14px;color:#777">% Work</div>
<div class="a" style="left:817px;top:201px;width:38px;height:16px;overflow:hidden;font-size:13px;line-height:14px;color:#777">Work</div>
<div class="a" style="left:867px;top:201px;width:36px;height:16px;overflow:hidden;font-size:13px;line-height:14px;color:#777">Actual</div>
<svg class="a" style="left:606px;top:202px" width="9" height="11" viewBox="0 0 9 11"><path d="M4.5 2 L4.5 9.5" stroke="#111" stroke-width="1.3"/><path d="M1.8 4.5 L4.5 1.3 L7.2 4.5" fill="none" stroke="#111" stroke-width="1.3"/></svg>
<div class="t" style="left:919px;top:201px;font-size:13px;color:#777">Period Total</div>
<div class="t" style="left:1019px;top:201px;font-size:13px;color:#777">Mon 5/12</div>
<div class="t" style="left:1088px;top:201px;font-size:13px;color:#777">Tue 5/13</div>
<div class="t" style="left:1151px;top:201px;font-size:13px;color:#777">Wed 5/14</div>
<div class="t" style="left:1220px;top:201px;font-size:13px;color:#777">Thu 5/15</div>
<div class="t" style="left:1284px;top:201px;font-size:13px;color:#777">Fri 5/16</div>
<div class="t" style="left:1340px;top:201px;font-size:13px;color:#777">Sat 5/17</div>
<div class="t" style="left:1400px;top:201px;font-size:13px;color:#777">Sun 5/18</div>
<div class="a" style="left:648px;top:201px;width:42px;height:16px;overflow:hidden;font-size:13px;line-height:14px;color:#555">Finish</div>
<svg class="a" style="left:291px;top:200px" width="14" height="14" viewBox="0 0 14 14"><defs><radialGradient id="ig" cx="0.35" cy="0.3" r="0.75"><stop offset="0" stop-color="#5b9ae8"/><stop offset="0.6" stop-color="#1566d0"/><stop offset="1" stop-color="#0b4fb0"/></radialGradient></defs><circle cx="7" cy="7" r="6.9" fill="url(#ig)"/><rect x="6" y="3" width="2.2" height="1.8" fill="#fff"/><path d="M5 6 L8.2 6 L8.2 9.8 L9.2 9.8 L9.2 11 L5 11 L5 9.8 L6 9.8 L6 7.2 L5 7.2 Z" fill="#fff"/></svg>
<div class="a" style="left:326px;top:233px;width:0;height:0;border-left:5px solid transparent;border-bottom:5px solid #555"></div>
<div class="a" style="left:333px;top:226px;width:236px;height:22px;overflow:hidden;"><span style="font-size:13px;font-weight:bold;color:#0072c6;line-height:14px">Planning Window: In Progress for Current Period</span></div>
<div class="a" style="left:574px;top:226px;width:65px;height:22px;overflow:hidden;"><span style="font-size:13px;font-weight:bold;color:#000;line-height:14px;letter-spacing:0.65px">2/24/2013</span></div>
<div class="a" style="left:644px;top:226px;width:65px;height:22px;overflow:hidden;"><span style="font-size:13px;font-weight:bold;color:#000;line-height:14px;letter-spacing:0.65px">6/24/2014</span></div>
<div class="a" style="left:714px;top:226px;width:45px;height:22px;overflow:hidden;"><span style="font-size:13px;font-weight:bold;color:#000;line-height:14px;letter-spacing:0px">2,889h</span></div>
<div class="a" style="left:764px;top:226px;width:45px;height:22px;overflow:hidden;"><span style="font-size:13px;font-weight:bold;color:#000;line-height:14px;letter-spacing:0px">0%</span></div>
<div class="a" style="left:814px;top:226px;width:45px;height:22px;overflow:hidden;"><span style="font-size:13px;font-weight:bold;color:#000;line-height:14px;letter-spacing:0px">2,889h</span></div>
<div class="a" style="left:864px;top:226px;width:39px;height:22px;overflow:hidden;"><span style="font-size:13px;font-weight:bold;color:#000;line-height:14px;letter-spacing:0px">0h</span></div>
<div class="a" style="left:339px;top:255px;width:0;height:0;border-left:5px solid transparent;border-bottom:5px solid #555"></div>
<div class="a" style="left:346px;top:248px;width:223px;height:22px;overflow:hidden;"><span style="font-size:13px;font-weight:bold;color:#000;line-height:14px">Project Name: CRM APAC Upgrade</span></div>
<div class="a" style="left:574px;top:248px;width:65px;height:22px;overflow:hidden;"><span style="font-size:13px;font-weight:bold;color:#000;line-height:14px;letter-spacing:0.65px">2/24/2013</span></div>
<div class="a" style="left:644px;top:248px;width:65px;height:22px;overflow:hidden;"><span style="font-size:13px;font-weight:bold;color:#000;line-height:14px;letter-spacing:0.65px">6/24/2014</span></div>
<div class="a" style="left:714px;top:248px;width:45px;height:22px;overflow:hidden;"><span style="font-size:13px;font-weight:bold;color:#000;line-height:14px;letter-spacing:0px">2,889h</span></div>
<div class="a" style="left:764px;top:248px;width:45px;height:22px;overflow:hidden;"><span style="font-size:13px;font-weight:bold;color:#000;line-height:14px;letter-spacing:0px">0%</span></div>
<div class="a" style="left:814px;top:248px;width:45px;height:22px;overflow:hidden;"><span style="font-size:13px;font-weight:bold;color:#000;line-height:14px;letter-spacing:0px">2,889h</span></div>
<div class="a" style="left:864px;top:248px;width:39px;height:22px;overflow:hidden;"><span style="font-size:13px;font-weight:bold;color:#000;line-height:14px;letter-spacing:0px">0h</span></div>
<div class="a" style="left:359px;top:270px;width:210px;height:22px;overflow:hidden;"><span style="font-size:13px;color:#0072c6;line-height:14px">Development</span><svg width="7" height="7" viewBox="0 0 7 7" style="margin:0 3px 0 2px;vertical-align:1px"><rect width="7" height="7" fill="#a6d98b"/><path d="M0.5 0.5h1.5v1.5h-1.5zM2.8 0h1.4v1.6h-1.4zM5 0.5h1.5v1.5h-1.5zM0 2.8h1.6v1.4h-1.6zM5.4 2.8h1.6v1.4h-1.6zM0.5 5h1.5v1.5h-1.5zM2.8 5.4h1.4v1.6h-1.4zM5 5h1.5v1.5h-1.5z" fill="#5cb83a"/><rect x="2.5" y="2.5" width="2" height="2" fill="#fbf3d0"/></svg><span style="display:inline-block;font-size:7px;line-height:7px;color:#1e7a0a;font-weight:bold;transform-origin:0 0;transform:scaleX(0.86);vertical-align:2px">NEW</span></div>
<div class="a" style="left:258px;top:273px;width:13px;height:13px;border:1px solid #555;background:#fff"></div>
<div class="a" style="left:574px;top:270px;width:65px;height:22px;overflow:hidden;"><span style="font-size:13px;font-weight:normal;color:#505050;line-height:14px;letter-spacing:0px">2/24/2013</span></div>
<div class="a" style="left:644px;top:270px;width:65px;height:22px;overflow:hidden;"><span style="font-size:13px;font-weight:normal;color:#505050;line-height:14px;letter-spacing:0px">6/24/2014</span></div>
<div class="a" style="left:714px;top:270px;width:45px;height:22px;overflow:hidden;"><span style="font-size:13px;font-weight:normal;color:#505050;line-height:14px;letter-spacing:0px">2,777h</span></div>
<div class="a" style="left:764px;top:270px;width:45px;height:22px;overflow:hidden;"><span style="font-size:13px;font-weight:normal;color:#505050;line-height:14px;letter-spacing:0px">0%</span></div>
<div class="a" style="left:814px;top:270px;width:45px;height:22px;overflow:hidden;"><span style="font-size:13px;font-weight:normal;color:#505050;line-height:14px;letter-spacing:0px">2,777h</span></div>
<div class="a" style="left:864px;top:270px;width:39px;height:22px;overflow:hidden;"><span style="font-size:13px;font-weight:normal;color:#505050;line-height:14px;letter-spacing:0px">0h</span></div>
<div class="t" style="left:915px;top:273px;font-size:13px;color:#505050">0h</div>
<div class="t" style="left:1016px;top:273px;font-size:13px;color:#505050">0h</div>
<div class="t" style="left:1085px;top:273px;font-size:13px;color:#505050">0h</div>
<div class="t" style="left:1148px;top:273px;font-size:13px;color:#505050">0h</div>
<div class="t" style="left:1217px;top:273px;font-size:13px;color:#505050">0h</div>
<div class="t" style="left:1281px;top:273px;font-size:13px;color:#505050">0h</div>
<div class="t" style="left:1337px;top:273px;font-size:13px;color:#505050">0h</div>
<div class="t" style="left:1397px;top:273px;font-size:13px;color:#505050">0h</div>
<div class="a" style="left:359px;top:292px;width:210px;height:22px;overflow:hidden;"><span style="font-size:13px;color:#0072c6;line-height:14px">Define preliminary resources</span><svg width="7" height="7" viewBox="0 0 7 7" style="margin:0 3px 0 2px;vertical-align:1px"><rect width="7" height="7" fill="#a6d98b"/><path d="M0.5 0.5h1.5v1.5h-1.5zM2.8 0h1.4v1.6h-1.4zM5 0.5h1.5v1.5h-1.5zM0 2.8h1.6v1.4h-1.6zM5.4 2.8h1.6v1.4h-1.6zM0.5 5h1.5v1.5h-1.5zM2.8 5.4h1.4v1.6h-1.4zM5 5h1.5v1.5h-1.5z" fill="#5cb83a"/><rect x="2.5" y="2.5" width="2" height="2" fill="#fbf3d0"/></svg><span style="display:inline-block;font-size:7px;line-height:7px;color:#1e7a0a;font-weight:bold;transform-origin:0 0;transform:scaleX(0.86);vertical-align:2px">NEW</span></div>
<div class="a" style="left:258px;top:295px;width:13px;height:13px;border:1px solid #555;background:#fff"></div>
<div class="a" style="left:574px;top:292px;width:65px;height:22px;overflow:hidden;"><span style="font-size:13px;font-weight:normal;color:#505050;line-height:14px;letter-spacing:0px">3/24/2014</span></div>
<div class="a" style="left:644px;top:292px;width:65px;height:22px;overflow:hidden;"><span style="font-size:13px;font-weight:normal;color:#505050;line-height:14px;letter-spacing:0px">3/24/2014</span></div>
<div class="a" style="left:714px;top:292px;width:45px;height:22px;overflow:hidden;"><span style="font-size:13px;font-weight:normal;color:#505050;line-height:14px;letter-spacing:0px">8h</span></div>
<div class="a" style="left:764px;top:292px;width:45px;height:22px;overflow:hidden;"><span style="font-size:13px;font-weight:normal;color:#505050;line-height:14px;letter-spacing:0px">0%</span></div>
<div class="a" style="left:814px;top:292px;width:45px;height:22px;overflow:hidden;"><span style="font-size:13px;font-weight:normal;color:#505050;line-height:14px;letter-spacing:0px">8h</span></div>
<div class="a" style="left:864px;top:292px;width:39px;height:22px;overflow:hidden;"><span style="font-size:13px;font-weight:normal;color:#505050;line-height:14px;letter-spacing:0px">0h</span></div>
<div class="a" style="left:359px;top:314px;width:210px;height:22px;overflow:hidden;"><span style="font-size:13px;color:#0072c6;line-height:14px">Scope</span><svg width="7" height="7" viewBox="0 0 7 7" style="margin:0 3px 0 2px;vertical-align:1px"><rect width="7" height="7" fill="#a6d98b"/><path d="M0.5 0.5h1.5v1.5h-1.5zM2.8 0h1.4v1.6h-1.4zM5 0.5h1.5v1.5h-1.5zM0 2.8h1.6v1.4h-1.6zM5.4 2.8h1.6v1.4h-1.6zM0.5 5h1.5v1.5h-1.5zM2.8 5.4h1.4v1.6h-1.4zM5 5h1.5v1.5h-1.5z" fill="#5cb83a"/><rect x="2.5" y="2.5" width="2" height="2" fill="#fbf3d0"/></svg><span style="display:inline-block;font-size:7px;line-height:7px;color:#1e7a0a;font-weight:bold;transform-origin:0 0;transform:scaleX(0.86);vertical-align:2px">NEW</span></div>
<div class="a" style="left:258px;top:317px;width:13px;height:13px;border:1px solid #555;background:#fff"></div>
<div class="a" style="left:574px;top:314px;width:65px;height:22px;overflow:hidden;"><span style="font-size:13px;font-weight:normal;color:#505050;line-height:14px;letter-spacing:0px">3/26/2014</span></div>
<div class="a" style="left:644px;top:314px;width:65px;height:22px;overflow:hidden;"><span style="font-size:13px;font-weight:normal;color:#505050;line-height:14px;letter-spacing:0px">3/26/2014</span></div>
<div class="a" style="left:714px;top:314px;width:45px;height:22px;overflow:hidden;"><span style="font-size:13px;font-weight:normal;color:#505050;line-height:14px;letter-spacing:0px">8h</span></div>
<div class="a" style="left:764px;top:314px;width:45px;height:22px;overflow:hidden;"><span style="font-size:13px;font-weight:normal;color:#505050;line-height:14px;letter-spacing:0px">0%</span></div>
<div class="a" style="left:814px;top:314px;width:45px;height:22px;overflow:hidden;"><span style="font-size:13px;font-weight:normal;color:#505050;line-height:14px;letter-spacing:0px">8h</span></div>
<div class="a" style="left:864px;top:314px;width:39px;height:22px;overflow:hidden;"><span style="font-size:13px;font-weight:normal;color:#505050;line-height:14px;letter-spacing:0px">0h</span></div>
<div class="a" style="left:359px;top:336px;width:210px;height:22px;overflow:hidden;"><span style="font-size:13px;color:#0072c6;line-height:14px">Conduct needs analysis</span><svg width="7" height="7" viewBox="0 0 7 7" style="margin:0 3px 0 2px;vertical-align:1px"><rect width="7" height="7" fill="#a6d98b"/><path d="M0.5 0.5h1.5v1.5h-1.5zM2.8 0h1.4v1.6h-1.4zM5 0.5h1.5v1.5h-1.5zM0 2.8h1.6v1.4h-1.6zM5.4 2.8h1.6v1.4h-1.6zM0.5 5h1.5v1.5h-1.5zM2.8 5.4h1.4v1.6h-1.4zM5 5h1.5v1.5h-1.5z" fill="#5cb83a"/><rect x="2.5" y="2.5" width="2" height="2" fill="#fbf3d0"/></svg><span style="display:inline-block;font-size:7px;line-height:7px;color:#1e7a0a;font-weight:bold;transform-origin:0 0;transform:scaleX(0.86);vertical-align:2px">NEW</span></div>
<div class="a" style="left:258px;top:339px;width:13px;height:13px;border:1px solid #555;background:#fff"></div>
<div class="a" style="left:574px;top:336px;width:65px;height:22px;overflow:hidden;"><span style="font-size:13px;font-weight:normal;color:#505050;line-height:14px;letter-spacing:0px">3/29/2014</span></div>
<div class="a" style="left:644px;top:336px;width:65px;height:22px;overflow:hidden;"><span style="font-size:13px;font-weight:normal;color:#505050;line-height:14px;letter-spacing:0px">3/29/2014</span></div>
<div class="a" style="left:714px;top:336px;width:45px;height:22px;overflow:hidden;"><span style="font-size:13px;font-weight:normal;color:#505050;line-height:14px;letter-spacing:0px">8h</span></div>
<div class="a" style="left:764px;top:336px;width:45px;height:22px;overflow:hidden;"><span style="font-size:13px;font-weight:normal;color:#505050;line-height:14px;letter-spacing:0px">0%</span></div>
<div class="a" style="left:814px;top:336px;width:45px;height:22px;overflow:hidden;"><span style="font-size:13px;font-weight:normal;color:#505050;line-height:14px;letter-spacing:0px">8h</span></div>
<div class="a" style="left:864px;top:336px;width:39px;height:22px;overflow:hidden;"><span style="font-size:13px;font-weight:normal;color:#505050;line-height:14px;letter-spacing:0px">0h</span></div>
<div class="a" style="left:359px;top:358px;width:210px;height:22px;overflow:hidden;"><span style="font-size:13px;color:#0072c6;line-height:14px">Develop delivery timeline</span><svg width="7" height="7" viewBox="0 0 7 7" style="margin:0 3px 0 2px;vertical-align:1px"><rect width="7" height="7" fill="#a6d98b"/><path d="M0.5 0.5h1.5v1.5h-1.5zM2.8 0h1.4v1.6h-1.4zM5 0.5h1.5v1.5h-1.5zM0 2.8h1.6v1.4h-1.6zM5.4 2.8h1.6v1.4h-1.6zM0.5 5h1.5v1.5h-1.5zM2.8 5.4h1.4v1.6h-1.4zM5 5h1.5v1.5h-1.5z" fill="#5cb83a"/><rect x="2.5" y="2.5" width="2" height="2" fill="#fbf3d0"/></svg><span style="display:inline-block;font-size:7px;line-height:7px;color:#1e7a0a;font-weight:bold;transform-origin:0 0;transform:scaleX(0.86);vertical-align:2px">NEW</span></div>
<div class="a" style="left:258px;top:361px;width:13px;height:13px;border:1px solid #555;background:#fff"></div>
<div class="a" style="left:574px;top:358px;width:65px;height:22px;overflow:hidden;"><span style="font-size:13px;font-weight:normal;color:#505050;line-height:14px;letter-spacing:0px">4/13/2014</span></div>
<div class="a" style="left:644px;top:358px;width:65px;height:22px;overflow:hidden;"><span style="font-size:13px;font-weight:normal;color:#505050;line-height:14px;letter-spacing:0px">4/13/2014</span></div>
<div class="a" style="left:714px;top:358px;width:45px;height:22px;overflow:hidden;"><span style="font-size:13px;font-weight:normal;color:#505050;line-height:14px;letter-spacing:0px">8h</span></div>
<div class="a" style="left:764px;top:358px;width:45px;height:22px;overflow:hidden;"><span style="font-size:13px;font-weight:normal;color:#505050;line-height:14px;letter-spacing:0px">0%</span></div>
<div class="a" style="left:814px;top:358px;width:45px;height:22px;overflow:hidden;"><span style="font-size:13px;font-weight:normal;color:#505050;line-height:14px;letter-spacing:0px">8h</span></div>
<div class="a" style="left:864px;top:358px;width:39px;height:22px;overflow:hidden;"><span style="font-size:13px;font-weight:normal;color:#505050;line-height:14px;letter-spacing:0px">0h</span></div>
<div class="a" style="left:359px;top:380px;width:210px;height:22px;overflow:hidden;"><span style="font-size:13px;color:#0072c6;line-height:14px">Develop training delivery mechanisms</span></div>
<div class="a" style="left:258px;top:383px;width:13px;height:13px;border:1px solid #555;background:#fff"></div>
<div class="a" style="left:574px;top:380px;width:65px;height:22px;overflow:hidden;"><span style="font-size:13px;font-weight:normal;color:#505050;line-height:14px;letter-spacing:0px">4/16/2014</span></div>
<div class="a" style="left:644px;top:380px;width:65px;height:22px;overflow:hidden;"><span style="font-size:13px;font-weight:normal;color:#505050;line-height:14px;letter-spacing:0px">4/16/2014</span></div>
<div class="a" style="left:714px;top:380px;width:45px;height:22px;overflow:hidden;"><span style="font-size:13px;font-weight:normal;color:#505050;line-height:14px;letter-spacing:0px">8h</span></div>
<div class="a" style="left:764px;top:380px;width:45px;height:22px;overflow:hidden;"><span style="font-size:13px;font-weight:normal;color:#505050;line-height:14px;letter-spacing:0px">0%</span></div>
<div class="a" style="left:814px;top:380px;width:45px;height:22px;overflow:hidden;"><span style="font-size:13px;font-weight:normal;color:#505050;line-height:14px;letter-spacing:0px">8h</span></div>
<div class="a" style="left:864px;top:380px;width:39px;height:22px;overflow:hidden;"><span style="font-size:13px;font-weight:normal;color:#505050;line-height:14px;letter-spacing:0px">0h</span></div>
<div class="a" style="left:359px;top:402px;width:210px;height:22px;overflow:hidden;"><span style="font-size:13px;color:#0072c6;line-height:14px">Incorporate feedback into functional specs</span></div>
<div class="a" style="left:258px;top:405px;width:13px;height:13px;border:1px solid #555;background:#fff"></div>
<div class="a" style="left:574px;top:402px;width:65px;height:22px;overflow:hidden;"><span style="font-size:13px;font-weight:normal;color:#505050;line-height:14px;letter-spacing:0px">5/4/2014</span></div>
<div class="a" style="left:644px;top:402px;width:65px;height:22px;overflow:hidden;"><span style="font-size:13px;font-weight:normal;color:#505050;line-height:14px;letter-spacing:0px">5/4/2014</span></div>
<div class="a" style="left:714px;top:402px;width:45px;height:22px;overflow:hidden;"><span style="font-size:13px;font-weight:normal;color:#505050;line-height:14px;letter-spacing:0px">8h</span></div>
<div class="a" style="left:764px;top:402px;width:45px;height:22px;overflow:hidden;"><span style="font-size:13px;font-weight:normal;color:#505050;line-height:14px;letter-spacing:0px">0%</span></div>
<div class="a" style="left:814px;top:402px;width:45px;height:22px;overflow:hidden;"><span style="font-size:13px;font-weight:normal;color:#505050;line-height:14px;letter-spacing:0px">8h</span></div>
<div class="a" style="left:864px;top:402px;width:39px;height:22px;overflow:hidden;"><span style="font-size:13px;font-weight:normal;color:#505050;line-height:14px;letter-spacing:0px">0h</span></div>
<div class="a" style="left:359px;top:424px;width:210px;height:22px;overflow:hidden;"><span style="font-size:13px;color:#0072c6;line-height:14px">Design complete</span><svg width="7" height="7" viewBox="0 0 7 7" style="margin:0 3px 0 2px;vertical-align:1px"><rect width="7" height="7" fill="#a6d98b"/><path d="M0.5 0.5h1.5v1.5h-1.5zM2.8 0h1.4v1.6h-1.4zM5 0.5h1.5v1.5h-1.5zM0 2.8h1.6v1.4h-1.6zM5.4 2.8h1.6v1.4h-1.6zM0.5 5h1.5v1.5h-1.5zM2.8 5.4h1.4v1.6h-1.4zM5 5h1.5v1.5h-1.5z" fill="#5cb83a"/><rect x="2.5" y="2.5" width="2" height="2" fill="#fbf3d0"/></svg><span style="display:inline-block;font-size:7px;line-height:7px;color:#1e7a0a;font-weight:bold;transform-origin:0 0;transform:scaleX(0.86);vertical-align:2px">NEW</span></div>
<div class="a" style="left:258px;top:427px;width:13px;height:13px;border:1px solid #555;background:#fff"></div>
<div class="a" style="left:574px;top:424px;width:65px;height:22px;overflow:hidden;"><span style="font-size:13px;font-weight:normal;color:#505050;line-height:14px;letter-spacing:0px">5/5/2014</span></div>
<div class="a" style="left:644px;top:424px;width:65px;height:22px;overflow:hidden;"><span style="font-size:13px;font-weight:normal;color:#505050;line-height:14px;letter-spacing:0px">5/5/2014</span></div>
<div class="a" style="left:714px;top:424px;width:45px;height:22px;overflow:hidden;"><span style="font-size:13px;font-weight:normal;color:#505050;line-height:14px;letter-spacing:0px">8h</span></div>
<div class="a" style="left:764px;top:424px;width:45px;height:22px;overflow:hidden;"><span style="font-size:13px;font-weight:normal;color:#505050;line-height:14px;letter-spacing:0px">0%</span></div>
<div class="a" style="left:814px;top:424px;width:45px;height:22px;overflow:hidden;"><span style="font-size:13px;font-weight:normal;color:#505050;line-height:14px;letter-spacing:0px">8h</span></div>
<div class="a" style="left:864px;top:424px;width:39px;height:22px;overflow:hidden;"><span style="font-size:13px;font-weight:normal;color:#505050;line-height:14px;letter-spacing:0px">0h</span></div>
<div class="a" style="left:359px;top:446px;width:210px;height:22px;overflow:hidden;"><span style="font-size:13px;color:#0072c6;line-height:14px">Obtain approval to proceed</span><svg width="7" height="7" viewBox="0 0 7 7" style="margin:0 3px 0 2px;vertical-align:1px"><rect width="7" height="7" fill="#a6d98b"/><path d="M0.5 0.5h1.5v1.5h-1.5zM2.8 0h1.4v1.6h-1.4zM5 0.5h1.5v1.5h-1.5zM0 2.8h1.6v1.4h-1.6zM5.4 2.8h1.6v1.4h-1.6zM0.5 5h1.5v1.5h-1.5zM2.8 5.4h1.4v1.6h-1.4zM5 5h1.5v1.5h-1.5z" fill="#5cb83a"/><rect x="2.5" y="2.5" width="2" height="2" fill="#fbf3d0"/></svg><span style="display:inline-block;font-size:7px;line-height:7px;color:#1e7a0a;font-weight:bold;transform-origin:0 0;transform:scaleX(0.86);vertical-align:2px">NEW</span></div>
<div class="a" style="left:258px;top:449px;width:13px;height:13px;border:1px solid #555;background:#fff"></div>
<div class="a" style="left:574px;top:446px;width:65px;height:22px;overflow:hidden;"><span style="font-size:13px;font-weight:normal;color:#505050;line-height:14px;letter-spacing:0px">5/5/2014</span></div>
<div class="a" style="left:644px;top:446px;width:65px;height:22px;overflow:hidden;"><span style="font-size:13px;font-weight:normal;color:#505050;line-height:14px;letter-spacing:0px">5/5/2014</span></div>
<div class="a" style="left:714px;top:446px;width:45px;height:22px;overflow:hidden;"><span style="font-size:13px;font-weight:normal;color:#505050;line-height:14px;letter-spacing:0px">8h</span></div>
<div class="a" style="left:764px;top:446px;width:45px;height:22px;overflow:hidden;"><span style="font-size:13px;font-weight:normal;color:#505050;line-height:14px;letter-spacing:0px">0%</span></div>
<div class="a" style="left:814px;top:446px;width:45px;height:22px;overflow:hidden;"><span style="font-size:13px;font-weight:normal;color:#505050;line-height:14px;letter-spacing:0px">8h</span></div>
<div class="a" style="left:864px;top:446px;width:39px;height:22px;overflow:hidden;"><span style="font-size:13px;font-weight:normal;color:#505050;line-height:14px;letter-spacing:0px">0h</span></div>
<div class="a" style="left:359px;top:468px;width:210px;height:22px;overflow:hidden;"><span style="font-size:13px;color:#0072c6;line-height:14px">Develop training delivery mechanisms</span></div>
<div class="a" style="left:258px;top:471px;width:13px;height:13px;border:1px solid #555;background:#fff"></div>
<div class="a" style="left:574px;top:468px;width:65px;height:22px;overflow:hidden;"><span style="font-size:13px;font-weight:normal;color:#505050;line-height:14px;letter-spacing:0px">5/6/2014</span></div>
<div class="a" style="left:644px;top:468px;width:65px;height:22px;overflow:hidden;"><span style="font-size:13px;font-weight:normal;color:#505050;line-height:14px;letter-spacing:0px">5/6/2014</span></div>
<div class="a" style="left:714px;top:468px;width:45px;height:22px;overflow:hidden;"><span style="font-size:13px;font-weight:normal;color:#505050;line-height:14px;letter-spacing:0px">8h</span></div>
<div class="a" style="left:764px;top:468px;width:45px;height:22px;overflow:hidden;"><span style="font-size:13px;font-weight:normal;color:#505050;line-height:14px;letter-spacing:0px">0%</span></div>
<div class="a" style="left:814px;top:468px;width:45px;height:22px;overflow:hidden;"><span style="font-size:13px;font-weight:normal;color:#505050;line-height:14px;letter-spacing:0px">8h</span></div>
<div class="a" style="left:864px;top:468px;width:39px;height:22px;overflow:hidden;"><span style="font-size:13px;font-weight:normal;color:#505050;line-height:14px;letter-spacing:0px">0h</span></div>
<div class="a" style="left:359px;top:490px;width:210px;height:22px;overflow:hidden;"><span style="font-size:13px;color:#0072c6;line-height:14px">Identify training delivery methodology</span></div>
<div class="a" style="left:258px;top:493px;width:13px;height:13px;border:1px solid #555;background:#fff"></div>
<div class="a" style="left:574px;top:490px;width:65px;height:22px;overflow:hidden;"><span style="font-size:13px;font-weight:normal;color:#505050;line-height:14px;letter-spacing:0px">5/7/2014</span></div>
<div class="a" style="left:644px;top:490px;width:65px;height:22px;overflow:hidden;"><span style="font-size:13px;font-weight:normal;color:#505050;line-height:14px;letter-spacing:0px">5/7/2014</span></div>
<div class="a" style="left:714px;top:490px;width:45px;height:22px;overflow:hidden;"><span style="font-size:13px;font-weight:normal;color:#505050;line-height:14px;letter-spacing:0px">8h</span></div>
<div class="a" style="left:764px;top:490px;width:45px;height:22px;overflow:hidden;"><span style="font-size:13px;font-weight:normal;color:#505050;line-height:14px;letter-spacing:0px">0%</span></div>
<div class="a" style="left:814px;top:490px;width:45px;height:22px;overflow:hidden;"><span style="font-size:13px;font-weight:normal;color:#505050;line-height:14px;letter-spacing:0px">8h</span></div>
<div class="a" style="left:864px;top:490px;width:39px;height:22px;overflow:hidden;"><span style="font-size:13px;font-weight:normal;color:#505050;line-height:14px;letter-spacing:0px">0h</span></div>
<div class="a" style="left:359px;top:512px;width:210px;height:22px;overflow:hidden;"><span style="font-size:13px;color:#0072c6;line-height:14px">Review functional specifications</span><svg width="7" height="7" viewBox="0 0 7 7" style="margin:0 3px 0 2px;vertical-align:1px"><rect width="7" height="7" fill="#a6d98b"/><path d="M0.5 0.5h1.5v1.5h-1.5zM2.8 0h1.4v1.6h-1.4zM5 0.5h1.5v1.5h-1.5zM0 2.8h1.6v1.4h-1.6zM5.4 2.8h1.6v1.4h-1.6zM0.5 5h1.5v1.5h-1.5zM2.8 5.4h1.4v1.6h-1.4zM5 5h1.5v1.5h-1.5z" fill="#5cb83a"/><rect x="2.5" y="2.5" width="2" height="2" fill="#fbf3d0"/></svg><span style="display:inline-block;font-size:7px;line-height:7px;color:#1e7a0a;font-weight:bold;transform-origin:0 0;transform:scaleX(0.86);vertical-align:2px">NEW</span></div>
<div class="a" style="left:258px;top:515px;width:13px;height:13px;border:1px solid #555;background:#fff"></div>
<div class="a" style="left:574px;top:512px;width:65px;height:22px;overflow:hidden;"><span style="font-size:13px;font-weight:normal;color:#505050;line-height:14px;letter-spacing:0px">5/7/2014</span></div>
<div class="a" style="left:644px;top:512px;width:65px;height:22px;overflow:hidden;"><span style="font-size:13px;font-weight:normal;color:#505050;line-height:14px;letter-spacing:0px">5/7/2014</span></div>
<div class="a" style="left:714px;top:512px;width:45px;height:22px;overflow:hidden;"><span style="font-size:13px;font-weight:normal;color:#505050;line-height:14px;letter-spacing:0px">8h</span></div>
<div class="a" style="left:764px;top:512px;width:45px;height:22px;overflow:hidden;"><span style="font-size:13px;font-weight:normal;color:#505050;line-height:14px;letter-spacing:0px">0%</span></div>
<div class="a" style="left:814px;top:512px;width:45px;height:22px;overflow:hidden;"><span style="font-size:13px;font-weight:normal;color:#505050;line-height:14px;letter-spacing:0px">8h</span></div>
<div class="a" style="left:864px;top:512px;width:39px;height:22px;overflow:hidden;"><span style="font-size:13px;font-weight:normal;color:#505050;line-height:14px;letter-spacing:0px">0h</span></div>
<div class="a" style="left:359px;top:534px;width:210px;height:22px;overflow:hidden;"><span style="font-size:13px;color:#0072c6;line-height:14px">Develop training specifications for end users</span></div>
<div class="a" style="left:258px;top:537px;width:13px;height:13px;border:1px solid #555;background:#fff"></div>
<div class="a" style="left:574px;top:534px;width:65px;height:22px;overflow:hidden;"><span style="font-size:13px;font-weight:normal;color:#505050;line-height:14px;letter-spacing:0px">5/10/2014</span></div>
<div class="a" style="left:644px;top:534px;width:65px;height:22px;overflow:hidden;"><span style="font-size:13px;font-weight:normal;color:#505050;line-height:14px;letter-spacing:0px">5/10/2014</span></div>
<div class="a" style="left:714px;top:534px;width:45px;height:22px;overflow:hidden;"><span style="font-size:13px;font-weight:normal;color:#505050;line-height:14px;letter-spacing:0px">8h</span></div>
<div class="a" style="left:764px;top:534px;width:45px;height:22px;overflow:hidden;"><span style="font-size:13px;font-weight:normal;color:#505050;line-height:14px;letter-spacing:0px">0%</span></div>
<div class="a" style="left:814px;top:534px;width:45px;height:22px;overflow:hidden;"><span style="font-size:13px;font-weight:normal;color:#505050;line-height:14px;letter-spacing:0px">8h</span></div>
<div class="a" style="left:864px;top:534px;width:39px;height:22px;overflow:hidden;"><span style="font-size:13px;font-weight:normal;color:#505050;line-height:14px;letter-spacing:0px">0h</span></div>
<div class="a" style="left:359px;top:556px;width:210px;height:22px;overflow:hidden;"><span style="font-size:13px;color:#0072c6;line-height:14px">Identify modular/tiered design parameters</span></div>
<div class="a" style="left:258px;top:559px;width:13px;height:13px;border:1px solid #555;background:#fff"></div>
<div class="a" style="left:574px;top:556px;width:65px;height:22px;overflow:hidden;"><span style="font-size:13px;font-weight:normal;color:#505050;line-height:14px;letter-spacing:0px">5/11/2014</span></div>
<div class="a" style="left:644px;top:556px;width:65px;height:22px;overflow:hidden;"><span style="font-size:13px;font-weight:normal;color:#505050;line-height:14px;letter-spacing:0px">5/11/2014</span></div>
<div class="a" style="left:714px;top:556px;width:45px;height:22px;overflow:hidden;"><span style="font-size:13px;font-weight:normal;color:#505050;line-height:14px;letter-spacing:0px">8h</span></div>
<div class="a" style="left:764px;top:556px;width:45px;height:22px;overflow:hidden;"><span style="font-size:13px;font-weight:normal;color:#505050;line-height:14px;letter-spacing:0px">0%</span></div>
<div class="a" style="left:814px;top:556px;width:45px;height:22px;overflow:hidden;"><span style="font-size:13px;font-weight:normal;color:#505050;line-height:14px;letter-spacing:0px">8h</span></div>
<div class="a" style="left:864px;top:556px;width:39px;height:22px;overflow:hidden;"><span style="font-size:13px;font-weight:normal;color:#505050;line-height:14px;letter-spacing:0px">0h</span></div>
<div class="a" style="left:359px;top:578px;width:210px;height:22px;overflow:hidden;"><span style="font-size:13px;color:#0072c6;line-height:14px">Assign development staff</span><svg width="7" height="7" viewBox="0 0 7 7" style="margin:0 3px 0 2px;vertical-align:1px"><rect width="7" height="7" fill="#a6d98b"/><path d="M0.5 0.5h1.5v1.5h-1.5zM2.8 0h1.4v1.6h-1.4zM5 0.5h1.5v1.5h-1.5zM0 2.8h1.6v1.4h-1.6zM5.4 2.8h1.6v1.4h-1.6zM0.5 5h1.5v1.5h-1.5zM2.8 5.4h1.4v1.6h-1.4zM5 5h1.5v1.5h-1.5z" fill="#5cb83a"/><rect x="2.5" y="2.5" width="2" height="2" fill="#fbf3d0"/></svg><span style="display:inline-block;font-size:7px;line-height:7px;color:#1e7a0a;font-weight:bold;transform-origin:0 0;transform:scaleX(0.86);vertical-align:2px">NEW</span></div>
<div class="a" style="left:258px;top:581px;width:13px;height:13px;border:1px solid #555;background:#fff"></div>
<div class="a" style="left:574px;top:578px;width:65px;height:22px;overflow:hidden;"><span style="font-size:13px;font-weight:normal;color:#505050;line-height:14px;letter-spacing:0px">5/13/2014</span></div>
<div class="a" style="left:644px;top:578px;width:65px;height:22px;overflow:hidden;"><span style="font-size:13px;font-weight:normal;color:#505050;line-height:14px;letter-spacing:0px">5/13/2014</span></div>
<div class="a" style="left:714px;top:578px;width:45px;height:22px;overflow:hidden;"><span style="font-size:13px;font-weight:normal;color:#505050;line-height:14px;letter-spacing:0px">8h</span></div>
<div class="a" style="left:764px;top:578px;width:45px;height:22px;overflow:hidden;"><span style="font-size:13px;font-weight:normal;color:#505050;line-height:14px;letter-spacing:0px">0%</span></div>
<div class="a" style="left:814px;top:578px;width:45px;height:22px;overflow:hidden;"><span style="font-size:13px;font-weight:normal;color:#505050;line-height:14px;letter-spacing:0px">8h</span></div>
<div class="a" style="left:864px;top:578px;width:39px;height:22px;overflow:hidden;"><span style="font-size:13px;font-weight:normal;color:#505050;line-height:14px;letter-spacing:0px">0h</span></div>
<div class="t" style="left:915px;top:581px;font-size:13px;color:#505050">0h</div>
<div class="t" style="left:1085px;top:581px;font-size:13px;color:#505050">0h</div>
<div class="a" style="left:326px;top:607px;width:0;height:0;border-left:5px solid transparent;border-bottom:5px solid #555"></div>
<div class="a" style="left:333px;top:600px;width:236px;height:22px;overflow:hidden;"><span style="font-size:13px;font-weight:bold;color:#0072c6;line-height:14px">Planning Window: Near Future - Next 2 Periods</span></div>
<div class="a" style="left:574px;top:600px;width:65px;height:22px;overflow:hidden;"><span style="font-size:13px;font-weight:bold;color:#000;line-height:14px;letter-spacing:0.65px">5/20/2014</span></div>
<div class="a" style="left:644px;top:600px;width:65px;height:22px;overflow:hidden;"><span style="font-size:13px;font-weight:bold;color:#000;line-height:14px;letter-spacing:0.65px">5/20/2014</span></div>
<div class="a" style="left:714px;top:600px;width:45px;height:22px;overflow:hidden;"><span style="font-size:13px;font-weight:bold;color:#000;line-height:14px;letter-spacing:0px">8h</span></div>
<div class="a" style="left:764px;top:600px;width:45px;height:22px;overflow:hidden;"><span style="font-size:13px;font-weight:bold;color:#000;line-height:14px;letter-spacing:0px">0%</span></div>
<div class="a" style="left:814px;top:600px;width:45px;height:22px;overflow:hidden;"><span style="font-size:13px;font-weight:bold;color:#000;line-height:14px;letter-spacing:0px">8h</span></div>
<div class="a" style="left:864px;top:600px;width:39px;height:22px;overflow:hidden;"><span style="font-size:13px;font-weight:bold;color:#000;line-height:14px;letter-spacing:0px">0h</span></div>
<div class="a" style="left:339px;top:629px;width:0;height:0;border-left:5px solid transparent;border-bottom:5px solid #555"></div>
<div class="a" style="left:346px;top:622px;width:223px;height:22px;overflow:hidden;"><span style="font-size:13px;font-weight:bold;color:#000;line-height:14px">Project Name: CRM APAC Upgrade</span></div>
<div class="a" style="left:574px;top:622px;width:65px;height:22px;overflow:hidden;"><span style="font-size:13px;font-weight:bold;color:#000;line-height:14px;letter-spacing:0.65px">5/20/2014</span></div>
<div class="a" style="left:644px;top:622px;width:65px;height:22px;overflow:hidden;"><span style="font-size:13px;font-weight:bold;color:#000;line-height:14px;letter-spacing:0.65px">5/20/2014</span></div>
<div class="a" style="left:714px;top:622px;width:45px;height:22px;overflow:hidden;"><span style="font-size:13px;font-weight:bold;color:#000;line-height:14px;letter-spacing:0px">8h</span></div>
<div class="a" style="left:764px;top:622px;width:45px;height:22px;overflow:hidden;"><span style="font-size:13px;font-weight:bold;color:#000;line-height:14px;letter-spacing:0px">0%</span></div>
<div class="a" style="left:814px;top:622px;width:45px;height:22px;overflow:hidden;"><span style="font-size:13px;font-weight:bold;color:#000;line-height:14px;letter-spacing:0px">8h</span></div>
<div class="a" style="left:864px;top:622px;width:39px;height:22px;overflow:hidden;"><span style="font-size:13px;font-weight:bold;color:#000;line-height:14px;letter-spacing:0px">0h</span></div>
<div class="a" style="left:359px;top:644px;width:210px;height:22px;overflow:hidden;"><span style="font-size:13px;color:#0072c6;line-height:14px">Develop training specifications for helpdesk</span></div>
<div class="a" style="left:258px;top:647px;width:13px;height:13px;border:1px solid #555;background:#fff"></div>
<div class="a" style="left:574px;top:644px;width:65px;height:22px;overflow:hidden;"><span style="font-size:13px;font-weight:normal;color:#505050;line-height:14px;letter-spacing:0px">5/20/2014</span></div>
<div class="a" style="left:644px;top:644px;width:65px;height:22px;overflow:hidden;"><span style="font-size:13px;font-weight:normal;color:#505050;line-height:14px;letter-spacing:0px">5/20/2014</span></div>
<div class="a" style="left:714px;top:644px;width:45px;height:22px;overflow:hidden;"><span style="font-size:13px;font-weight:normal;color:#505050;line-height:14px;letter-spacing:0px">8h</span></div>
<div class="a" style="left:764px;top:644px;width:45px;height:22px;overflow:hidden;"><span style="font-size:13px;font-weight:normal;color:#505050;line-height:14px;letter-spacing:0px">0%</span></div>
<div class="a" style="left:814px;top:644px;width:45px;height:22px;overflow:hidden;"><span style="font-size:13px;font-weight:normal;color:#505050;line-height:14px;letter-spacing:0px">8h</span></div>
<div class="a" style="left:864px;top:644px;width:39px;height:22px;overflow:hidden;"><span style="font-size:13px;font-weight:normal;color:#505050;line-height:14px;letter-spacing:0px">0h</span></div>
<div class="a" style="left:326px;top:673px;width:0;height:0;border-left:5px solid transparent;border-bottom:5px solid #555"></div>
<div class="a" style="left:333px;top:666px;width:236px;height:22px;overflow:hidden;"><span style="font-size:13px;font-weight:bold;color:#0072c6;line-height:14px">Planning Window: Distant Future</span></div>
<div class="a" style="left:574px;top:666px;width:65px;height:22px;overflow:hidden;"><span style="font-size:13px;font-weight:bold;color:#000;line-height:14px;letter-spacing:0.65px">6/3/2014</span></div>
<div class="a" style="left:644px;top:666px;width:65px;height:22px;overflow:hidden;"><span style="font-size:13px;font-weight:bold;color:#000;line-height:14px;letter-spacing:0.65px">8/23/2014</span></div>
<div class="a" style="left:714px;top:666px;width:45px;height:22px;overflow:hidden;"><span style="font-size:13px;font-weight:bold;color:#000;line-height:14px;letter-spacing:0px">176h</span></div>
<div class="a" style="left:764px;top:666px;width:45px;height:22px;overflow:hidden;"><span style="font-size:13px;font-weight:bold;color:#000;line-height:14px;letter-spacing:0px">0%</span></div>
<div class="a" style="left:814px;top:666px;width:45px;height:22px;overflow:hidden;"><span style="font-size:13px;font-weight:bold;color:#000;line-height:14px;letter-spacing:0px">176h</span></div>
<div class="a" style="left:864px;top:666px;width:39px;height:22px;overflow:hidden;"><span style="font-size:13px;font-weight:bold;color:#000;line-height:14px;letter-spacing:0px">0h</span></div>
<div class="a" style="left:339px;top:695px;width:0;height:0;border-left:5px solid transparent;border-bottom:5px solid #555"></div>
<div class="a" style="left:346px;top:688px;width:223px;height:22px;overflow:hidden;"><span style="font-size:13px;font-weight:bold;color:#000;line-height:14px">Project Name: CRM APAC Upgrade</span></div>
<div class="a" style="left:574px;top:688px;width:65px;height:22px;overflow:hidden;"><span style="font-size:13px;font-weight:bold;color:#000;line-height:14px;letter-spacing:0.65px">6/3/2014</span></div>
<div class="a" style="left:644px;top:688px;width:65px;height:22px;overflow:hidden;"><span style="font-size:13px;font-weight:bold;color:#000;line-height:14px;letter-spacing:0.65px">8/23/2014</span></div>
<div class="a" style="left:714px;top:688px;width:45px;height:22px;overflow:hidden;"><span style="font-size:13px;font-weight:bold;color:#000;line-height:14px;letter-spacing:0px">176h</span></div>
<div class="a" style="left:764px;top:688px;width:45px;height:22px;overflow:hidden;"><span style="font-size:13px;font-weight:bold;color:#000;line-height:14px;letter-spacing:0px">0%</span></div>
<div class="a" style="left:814px;top:688px;width:45px;height:22px;overflow:hidden;"><span style="font-size:13px;font-weight:bold;color:#000;line-height:14px;letter-spacing:0px">176h</span></div>
<div class="a" style="left:864px;top:688px;width:39px;height:22px;overflow:hidden;"><span style="font-size:13px;font-weight:bold;color:#000;line-height:14px;letter-spacing:0px">0h</span></div>
<div class="a" style="left:359px;top:710px;width:210px;height:22px;overflow:hidden;"><span style="font-size:13px;color:#0072c6;line-height:14px">Develop code</span><svg width="7" height="7" viewBox="0 0 7 7" style="margin:0 3px 0 2px;vertical-align:1px"><rect width="7" height="7" fill="#a6d98b"/><path d="M0.5 0.5h1.5v1.5h-1.5zM2.8 0h1.4v1.6h-1.4zM5 0.5h1.5v1.5h-1.5zM0 2.8h1.6v1.4h-1.6zM5.4 2.8h1.6v1.4h-1.6zM0.5 5h1.5v1.5h-1.5zM2.8 5.4h1.4v1.6h-1.4zM5 5h1.5v1.5h-1.5z" fill="#5cb83a"/><rect x="2.5" y="2.5" width="2" height="2" fill="#fbf3d0"/></svg><span style="display:inline-block;font-size:7px;line-height:7px;color:#1e7a0a;font-weight:bold;transform-origin:0 0;transform:scaleX(0.86);vertical-align:2px">NEW</span></div>
<div class="a" style="left:258px;top:713px;width:13px;height:13px;border:1px solid #555;background:#fff"></div>
<div class="a" style="left:574px;top:710px;width:65px;height:22px;overflow:hidden;"><span style="font-size:13px;font-weight:normal;color:#505050;line-height:14px;letter-spacing:0px">6/3/2014</span></div>
<div class="a" style="left:644px;top:710px;width:65px;height:22px;overflow:hidden;"><span style="font-size:13px;font-weight:normal;color:#505050;line-height:14px;letter-spacing:0px">6/3/2014</span></div>
<div class="a" style="left:714px;top:710px;width:45px;height:22px;overflow:hidden;"><span style="font-size:13px;font-weight:normal;color:#505050;line-height:14px;letter-spacing:0px">8h</span></div>
<div class="a" style="left:764px;top:710px;width:45px;height:22px;overflow:hidden;"><span style="font-size:13px;font-weight:normal;color:#505050;line-height:14px;letter-spacing:0px">0%</span></div>
<div class="a" style="left:814px;top:710px;width:45px;height:22px;overflow:hidden;"><span style="font-size:13px;font-weight:normal;color:#505050;line-height:14px;letter-spacing:0px">8h</span></div>
<div class="a" style="left:864px;top:710px;width:39px;height:22px;overflow:hidden;"><span style="font-size:13px;font-weight:normal;color:#505050;line-height:14px;letter-spacing:0px">0h</span></div>
<div class="a" style="left:359px;top:732px;width:210px;height:22px;overflow:hidden;"><span style="font-size:13px;color:#0072c6;line-height:14px">Developer testing (primary debugging)</span></div>
<div class="a" style="left:258px;top:735px;width:13px;height:13px;border:1px solid #555;background:#fff"></div>
<div class="a" style="left:574px;top:732px;width:65px;height:22px;overflow:hidden;"><span style="font-size:13px;font-weight:normal;color:#505050;line-height:14px;letter-spacing:0px">6/24/2014</span></div>
<div class="a" style="left:644px;top:732px;width:65px;height:22px;overflow:hidden;"><span style="font-size:13px;font-weight:normal;color:#505050;line-height:14px;letter-spacing:0px">6/24/2014</span></div>
<div class="a" style="left:714px;top:732px;width:45px;height:22px;overflow:hidden;"><span style="font-size:13px;font-weight:normal;color:#505050;line-height:14px;letter-spacing:0px">8h</span></div>
<div class="a" style="left:764px;top:732px;width:45px;height:22px;overflow:hidden;"><span style="font-size:13px;font-weight:normal;color:#505050;line-height:14px;letter-spacing:0px">0%</span></div>
<div class="a" style="left:814px;top:732px;width:45px;height:22px;overflow:hidden;"><span style="font-size:13px;font-weight:normal;color:#505050;line-height:14px;letter-spacing:0px">8h</span></div>
<div class="a" style="left:864px;top:732px;width:39px;height:22px;overflow:hidden;"><span style="font-size:13px;font-weight:normal;color:#505050;line-height:14px;letter-spacing:0px">0h</span></div>
<div class="a" style="left:359px;top:754px;width:210px;height:22px;overflow:hidden;"><span style="font-size:13px;color:#0072c6;line-height:14px">Finalize training materials</span><svg width="7" height="7" viewBox="0 0 7 7" style="margin:0 3px 0 2px;vertical-align:1px"><rect width="7" height="7" fill="#a6d98b"/><path d="M0.5 0.5h1.5v1.5h-1.5zM2.8 0h1.4v1.6h-1.4zM5 0.5h1.5v1.5h-1.5zM0 2.8h1.6v1.4h-1.6zM5.4 2.8h1.6v1.4h-1.6zM0.5 5h1.5v1.5h-1.5zM2.8 5.4h1.4v1.6h-1.4zM5 5h1.5v1.5h-1.5z" fill="#5cb83a"/><rect x="2.5" y="2.5" width="2" height="2" fill="#fbf3d0"/></svg><span style="display:inline-block;font-size:7px;line-height:7px;color:#1e7a0a;font-weight:bold;transform-origin:0 0;transform:scaleX(0.86);vertical-align:2px">NEW</span></div>
<div class="a" style="left:258px;top:757px;width:13px;height:13px;border:1px solid #555;background:#fff"></div>
<div class="a" style="left:574px;top:754px;width:65px;height:22px;overflow:hidden;"><span style="font-size:13px;font-weight:normal;color:#505050;line-height:14px;letter-spacing:0px">6/30/2014</span></div>
<div class="a" style="left:644px;top:754px;width:65px;height:22px;overflow:hidden;"><span style="font-size:13px;font-weight:normal;color:#505050;line-height:14px;letter-spacing:0px">6/30/2014</span></div>
<div class="a" style="left:714px;top:754px;width:45px;height:22px;overflow:hidden;"><span style="font-size:13px;font-weight:normal;color:#505050;line-height:14px;letter-spacing:0px">8h</span></div>
<div class="a" style="left:764px;top:754px;width:45px;height:22px;overflow:hidden;"><span style="font-size:13px;font-weight:normal;color:#505050;line-height:14px;letter-spacing:0px">0%</span></div>
<div class="a" style="left:814px;top:754px;width:45px;height:22px;overflow:hidden;"><span style="font-size:13px;font-weight:normal;color:#505050;line-height:14px;letter-spacing:0px">8h</span></div>
<div class="a" style="left:864px;top:754px;width:39px;height:22px;overflow:hidden;"><span style="font-size:13px;font-weight:normal;color:#505050;line-height:14px;letter-spacing:0px">0h</span></div>
<div class="a" style="left:359px;top:776px;width:210px;height:22px;overflow:hidden;"><span style="font-size:13px;color:#0072c6;line-height:14px">Conduct training usability study</span><svg width="7" height="7" viewBox="0 0 7 7" style="margin:0 3px 0 2px;vertical-align:1px"><rect width="7" height="7" fill="#a6d98b"/><path d="M0.5 0.5h1.5v1.5h-1.5zM2.8 0h1.4v1.6h-1.4zM5 0.5h1.5v1.5h-1.5zM0 2.8h1.6v1.4h-1.6zM5.4 2.8h1.6v1.4h-1.6zM0.5 5h1.5v1.5h-1.5zM2.8 5.4h1.4v1.6h-1.4zM5 5h1.5v1.5h-1.5z" fill="#5cb83a"/><rect x="2.5" y="2.5" width="2" height="2" fill="#fbf3d0"/></svg><span style="display:inline-block;font-size:7px;line-height:7px;color:#1e7a0a;font-weight:bold;transform-origin:0 0;transform:scaleX(0.86);vertical-align:2px">NEW</span></div>
<div class="a" style="left:258px;top:779px;width:13px;height:13px;border:1px solid #555;background:#fff"></div>
<div class="a" style="left:574px;top:776px;width:65px;height:22px;overflow:hidden;"><span style="font-size:13px;font-weight:normal;color:#505050;line-height:14px;letter-spacing:0px">7/1/2014</span></div>
<div class="a" style="left:644px;top:776px;width:65px;height:22px;overflow:hidden;"><span style="font-size:13px;font-weight:normal;color:#505050;line-height:14px;letter-spacing:0px">7/1/2014</span></div>
<div class="a" style="left:714px;top:776px;width:45px;height:22px;overflow:hidden;"><span style="font-size:13px;font-weight:normal;color:#505050;line-height:14px;letter-spacing:0px">8h</span></div>
<div class="a" style="left:764px;top:776px;width:45px;height:22px;overflow:hidden;"><span style="font-size:13px;font-weight:normal;color:#505050;line-height:14px;letter-spacing:0px">0%</span></div>
<div class="a" style="left:814px;top:776px;width:45px;height:22px;overflow:hidden;"><span style="font-size:13px;font-weight:normal;color:#505050;line-height:14px;letter-spacing:0px">8h</span></div>
<div class="a" style="left:864px;top:776px;width:39px;height:22px;overflow:hidden;"><span style="font-size:13px;font-weight:normal;color:#505050;line-height:14px;letter-spacing:0px">0h</span></div>
<div class="a" style="left:359px;top:798px;width:210px;height:22px;overflow:hidden;"><span style="font-size:13px;color:#0072c6;line-height:14px">Develop training materials</span><svg width="7" height="7" viewBox="0 0 7 7" style="margin:0 3px 0 2px;vertical-align:1px"><rect width="7" height="7" fill="#a6d98b"/><path d="M0.5 0.5h1.5v1.5h-1.5zM2.8 0h1.4v1.6h-1.4zM5 0.5h1.5v1.5h-1.5zM0 2.8h1.6v1.4h-1.6zM5.4 2.8h1.6v1.4h-1.6zM0.5 5h1.5v1.5h-1.5zM2.8 5.4h1.4v1.6h-1.4zM5 5h1.5v1.5h-1.5z" fill="#5cb83a"/><rect x="2.5" y="2.5" width="2" height="2" fill="#fbf3d0"/></svg><span style="display:inline-block;font-size:7px;line-height:7px;color:#1e7a0a;font-weight:bold;transform-origin:0 0;transform:scaleX(0.86);vertical-align:2px">NEW</span></div>
<div class="a" style="left:258px;top:801px;width:13px;height:13px;border:1px solid #555;background:#fff"></div>
<div class="a" style="left:574px;top:798px;width:65px;height:22px;overflow:hidden;"><span style="font-size:13px;font-weight:normal;color:#505050;line-height:14px;letter-spacing:0px">7/15/2014</span></div>
<div class="a" style="left:644px;top:798px;width:65px;height:22px;overflow:hidden;"><span style="font-size:13px;font-weight:normal;color:#505050;line-height:14px;letter-spacing:0px">7/15/2014</span></div>
<div class="a" style="left:714px;top:798px;width:45px;height:22px;overflow:hidden;"><span style="font-size:13px;font-weight:normal;color:#505050;line-height:14px;letter-spacing:0px">8h</span></div>
<div class="a" style="left:764px;top:798px;width:45px;height:22px;overflow:hidden;"><span style="font-size:13px;font-weight:normal;color:#505050;line-height:14px;letter-spacing:0px">0%</span></div>
<div class="a" style="left:814px;top:798px;width:45px;height:22px;overflow:hidden;"><span style="font-size:13px;font-weight:normal;color:#505050;line-height:14px;letter-spacing:0px">8h</span></div>
<div class="a" style="left:864px;top:798px;width:39px;height:22px;overflow:hidden;"><span style="font-size:13px;font-weight:normal;color:#505050;line-height:14px;letter-spacing:0px">0h</span></div>
</body></html>
